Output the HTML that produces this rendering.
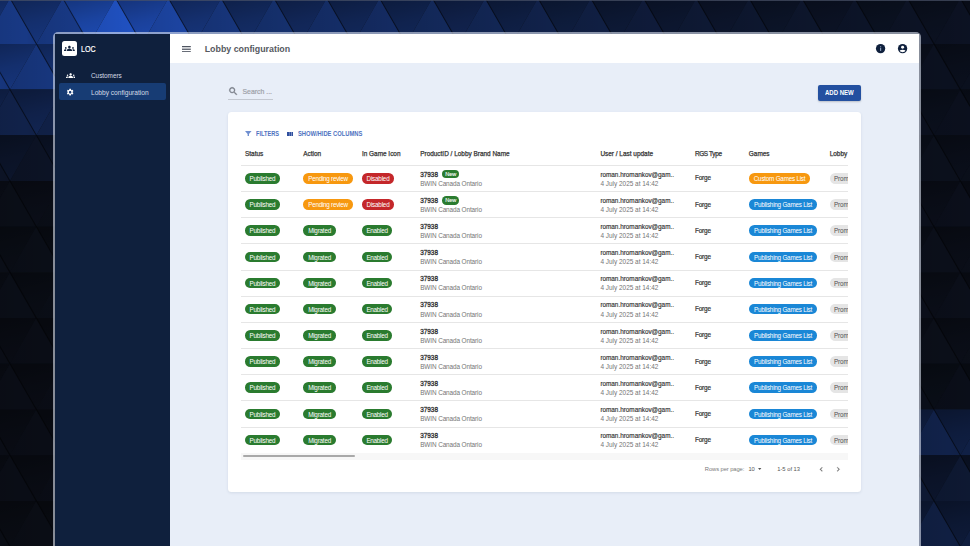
<!DOCTYPE html>
<html><head><meta charset="utf-8"><style>
html,body{margin:0;padding:0;}
body{width:970px;height:546px;overflow:hidden;position:relative;background:#0b0e15;font-family:"Liberation Sans",sans-serif;}
.abs{position:absolute;}
.t{position:absolute;white-space:nowrap;line-height:normal;}
#win{position:absolute;left:53px;top:32px;width:864px;height:530px;border:2px solid rgba(220,226,240,0.6);border-right-width:2.5px;border-radius:5px 5px 0 0;overflow:hidden;background:#e8eef8;background-clip:padding-box;}
#side{position:absolute;left:55px;top:34px;width:115px;height:520px;background:#0f203d;}
#top{position:absolute;left:170px;top:34px;width:748.5px;height:28.5px;background:#fff;}
#card{position:absolute;left:227.8px;top:112px;width:633px;height:380.3px;background:#fff;border-radius:3.5px;box-shadow:0 1px 3px rgba(30,50,90,0.10);}
#clip{position:absolute;left:0;top:0;width:848px;height:546px;overflow:hidden;}
.bd{position:absolute;text-align:center;white-space:nowrap;overflow:hidden;font-family:"Liberation Sans",sans-serif;}
.div{position:absolute;left:240.5px;width:607.5px;height:0.9px;background:#e6e6e6;}
</style></head><body>
<svg width="970" height="546" style="position:absolute;left:0;top:0"><defs><linearGradient id="gd" x1="0.35" y1="0" x2="0.65" y2="1"><stop offset="0" stop-color="#000" stop-opacity="0.34"/><stop offset="0.5" stop-color="#000" stop-opacity="0.18"/><stop offset="1" stop-color="#000" stop-opacity="0.08"/></linearGradient><linearGradient id="gu" x1="0" y1="0" x2="1" y2="0"><stop offset="0" stop-color="#000" stop-opacity="0.08"/><stop offset="0.8" stop-color="#000" stop-opacity="0"/><stop offset="1" stop-color="#000" stop-opacity="0.05"/></linearGradient></defs><path d="M-95.6 -1.8L-69.2 43.9L-122.0 43.9Z" fill="rgb(24, 57, 133)"/><path d="M-95.6 -1.8L-69.2 43.9L-122.0 43.9Z" fill="url(#gu)"/><path d="M-95.6 -1.8L-42.8 -1.8L-69.2 43.9Z" fill="rgb(24, 57, 133)"/><path d="M-95.6 -1.8L-42.8 -1.8L-69.2 43.9Z" fill="url(#gd)"/><path d="M-42.8 -1.8L-16.4 43.9L-69.2 43.9Z" fill="rgb(24, 57, 133)"/><path d="M-42.8 -1.8L-16.4 43.9L-69.2 43.9Z" fill="url(#gu)"/><path d="M-42.8 -1.8L10.0 -1.8L-16.4 43.9Z" fill="rgb(24, 57, 133)"/><path d="M-42.8 -1.8L10.0 -1.8L-16.4 43.9Z" fill="url(#gd)"/><path d="M10.0 -1.8L36.4 43.9L-16.4 43.9Z" fill="rgb(24, 57, 133)"/><path d="M10.0 -1.8L36.4 43.9L-16.4 43.9Z" fill="url(#gu)"/><path d="M10.0 -1.8L62.8 -1.8L36.4 43.9Z" fill="rgb(24, 57, 133)"/><path d="M10.0 -1.8L62.8 -1.8L36.4 43.9Z" fill="url(#gd)"/><path d="M62.8 -1.8L89.2 43.9L36.4 43.9Z" fill="rgb(24, 57, 133)"/><path d="M62.8 -1.8L89.2 43.9L36.4 43.9Z" fill="url(#gu)"/><path d="M62.8 -1.8L115.6 -1.8L89.2 43.9Z" fill="rgb(32, 82, 195)"/><path d="M62.8 -1.8L115.6 -1.8L89.2 43.9Z" fill="url(#gd)"/><path d="M115.6 -1.8L142.0 43.9L89.2 43.9Z" fill="rgb(32, 81, 193)"/><path d="M115.6 -1.8L142.0 43.9L89.2 43.9Z" fill="url(#gu)"/><path d="M115.6 -1.8L168.4 -1.8L142.0 43.9Z" fill="rgb(32, 79, 189)"/><path d="M115.6 -1.8L168.4 -1.8L142.0 43.9Z" fill="url(#gd)"/><path d="M168.4 -1.8L194.8 43.9L142.0 43.9Z" fill="rgb(28, 68, 161)"/><path d="M168.4 -1.8L194.8 43.9L142.0 43.9Z" fill="url(#gu)"/><path d="M168.4 -1.8L221.2 -1.8L194.8 43.9Z" fill="rgb(25, 58, 135)"/><path d="M168.4 -1.8L221.2 -1.8L194.8 43.9Z" fill="url(#gd)"/><path d="M221.2 -1.8L247.6 43.9L194.8 43.9Z" fill="rgb(23, 53, 123)"/><path d="M221.2 -1.8L247.6 43.9L194.8 43.9Z" fill="url(#gu)"/><path d="M221.2 -1.8L274.0 -1.8L247.6 43.9Z" fill="rgb(22, 50, 114)"/><path d="M221.2 -1.8L274.0 -1.8L247.6 43.9Z" fill="url(#gd)"/><path d="M274.0 -1.8L300.4 43.9L247.6 43.9Z" fill="rgb(21, 48, 109)"/><path d="M274.0 -1.8L300.4 43.9L247.6 43.9Z" fill="url(#gu)"/><path d="M274.0 -1.8L326.8 -1.8L300.4 43.9Z" fill="rgb(21, 46, 105)"/><path d="M274.0 -1.8L326.8 -1.8L300.4 43.9Z" fill="url(#gd)"/><path d="M326.8 -1.8L353.2 43.9L300.4 43.9Z" fill="rgb(20, 45, 103)"/><path d="M326.8 -1.8L353.2 43.9L300.4 43.9Z" fill="url(#gu)"/><path d="M326.8 -1.8L379.6 -1.8L353.2 43.9Z" fill="rgb(20, 44, 100)"/><path d="M326.8 -1.8L379.6 -1.8L353.2 43.9Z" fill="url(#gd)"/><path d="M379.6 -1.8L406.0 43.9L353.2 43.9Z" fill="rgb(20, 43, 98)"/><path d="M379.6 -1.8L406.0 43.9L353.2 43.9Z" fill="url(#gu)"/><path d="M379.6 -1.8L432.4 -1.8L406.0 43.9Z" fill="rgb(19, 42, 95)"/><path d="M379.6 -1.8L432.4 -1.8L406.0 43.9Z" fill="url(#gd)"/><path d="M432.4 -1.8L458.8 43.9L406.0 43.9Z" fill="rgb(19, 41, 91)"/><path d="M432.4 -1.8L458.8 43.9L406.0 43.9Z" fill="url(#gu)"/><path d="M432.4 -1.8L485.2 -1.8L458.8 43.9Z" fill="rgb(19, 39, 88)"/><path d="M432.4 -1.8L485.2 -1.8L458.8 43.9Z" fill="url(#gd)"/><path d="M485.2 -1.8L511.6 43.9L458.8 43.9Z" fill="rgb(18, 38, 84)"/><path d="M485.2 -1.8L511.6 43.9L458.8 43.9Z" fill="url(#gu)"/><path d="M485.2 -1.8L538.0 -1.8L511.6 43.9Z" fill="rgb(17, 36, 80)"/><path d="M485.2 -1.8L538.0 -1.8L511.6 43.9Z" fill="url(#gd)"/><path d="M538.0 -1.8L564.4 43.9L511.6 43.9Z" fill="rgb(17, 34, 75)"/><path d="M538.0 -1.8L564.4 43.9L511.6 43.9Z" fill="url(#gu)"/><path d="M538.0 -1.8L590.8 -1.8L564.4 43.9Z" fill="rgb(16, 33, 71)"/><path d="M538.0 -1.8L590.8 -1.8L564.4 43.9Z" fill="url(#gd)"/><path d="M590.8 -1.8L617.2 43.9L564.4 43.9Z" fill="rgb(16, 31, 67)"/><path d="M590.8 -1.8L617.2 43.9L564.4 43.9Z" fill="url(#gu)"/><path d="M590.8 -1.8L643.6 -1.8L617.2 43.9Z" fill="rgb(15, 29, 62)"/><path d="M590.8 -1.8L643.6 -1.8L617.2 43.9Z" fill="url(#gd)"/><path d="M643.6 -1.8L670.0 43.9L617.2 43.9Z" fill="rgb(15, 27, 58)"/><path d="M643.6 -1.8L670.0 43.9L617.2 43.9Z" fill="url(#gu)"/><path d="M643.6 -1.8L696.4 -1.8L670.0 43.9Z" fill="rgb(14, 26, 55)"/><path d="M643.6 -1.8L696.4 -1.8L670.0 43.9Z" fill="url(#gd)"/><path d="M696.4 -1.8L722.8 43.9L670.0 43.9Z" fill="rgb(14, 25, 52)"/><path d="M696.4 -1.8L722.8 43.9L670.0 43.9Z" fill="url(#gu)"/><path d="M696.4 -1.8L749.2 -1.8L722.8 43.9Z" fill="rgb(14, 24, 50)"/><path d="M696.4 -1.8L749.2 -1.8L722.8 43.9Z" fill="url(#gd)"/><path d="M749.2 -1.8L775.6 43.9L722.8 43.9Z" fill="rgb(13, 23, 47)"/><path d="M749.2 -1.8L775.6 43.9L722.8 43.9Z" fill="url(#gu)"/><path d="M749.2 -1.8L802.0 -1.8L775.6 43.9Z" fill="rgb(13, 23, 46)"/><path d="M749.2 -1.8L802.0 -1.8L775.6 43.9Z" fill="url(#gd)"/><path d="M802.0 -1.8L828.4 43.9L775.6 43.9Z" fill="rgb(13, 22, 44)"/><path d="M802.0 -1.8L828.4 43.9L775.6 43.9Z" fill="url(#gu)"/><path d="M802.0 -1.8L854.8 -1.8L828.4 43.9Z" fill="rgb(13, 21, 42)"/><path d="M802.0 -1.8L854.8 -1.8L828.4 43.9Z" fill="url(#gd)"/><path d="M854.8 -1.8L881.2 43.9L828.4 43.9Z" fill="rgb(12, 20, 40)"/><path d="M854.8 -1.8L881.2 43.9L828.4 43.9Z" fill="url(#gu)"/><path d="M854.8 -1.8L907.6 -1.8L881.2 43.9Z" fill="rgb(12, 20, 38)"/><path d="M854.8 -1.8L907.6 -1.8L881.2 43.9Z" fill="url(#gd)"/><path d="M907.6 -1.8L934.0 43.9L881.2 43.9Z" fill="rgb(12, 19, 37)"/><path d="M907.6 -1.8L934.0 43.9L881.2 43.9Z" fill="url(#gu)"/><path d="M907.6 -1.8L960.4 -1.8L934.0 43.9Z" fill="rgb(12, 19, 36)"/><path d="M907.6 -1.8L960.4 -1.8L934.0 43.9Z" fill="url(#gd)"/><path d="M960.4 -1.8L986.8 43.9L934.0 43.9Z" fill="rgb(12, 18, 35)"/><path d="M960.4 -1.8L986.8 43.9L934.0 43.9Z" fill="url(#gu)"/><path d="M960.4 -1.8L1013.2 -1.8L986.8 43.9Z" fill="rgb(12, 18, 34)"/><path d="M960.4 -1.8L1013.2 -1.8L986.8 43.9Z" fill="url(#gd)"/><path d="M1013.2 -1.8L1039.6 43.9L986.8 43.9Z" fill="rgb(12, 18, 34)"/><path d="M1013.2 -1.8L1039.6 43.9L986.8 43.9Z" fill="url(#gu)"/><path d="M1013.2 -1.8L1066.0 -1.8L1039.6 43.9Z" fill="rgb(12, 18, 34)"/><path d="M1013.2 -1.8L1066.0 -1.8L1039.6 43.9Z" fill="url(#gd)"/><path d="M1066.0 -1.8L1092.4 43.9L1039.6 43.9Z" fill="rgb(12, 18, 34)"/><path d="M1066.0 -1.8L1092.4 43.9L1039.6 43.9Z" fill="url(#gu)"/><path d="M1066.0 -1.8L1118.8 -1.8L1092.4 43.9Z" fill="rgb(12, 18, 34)"/><path d="M1066.0 -1.8L1118.8 -1.8L1092.4 43.9Z" fill="url(#gd)"/><path d="M-69.2 43.9L-42.8 89.6L-95.6 89.6Z" fill="rgb(23, 54, 125)"/><path d="M-69.2 43.9L-42.8 89.6L-95.6 89.6Z" fill="url(#gu)"/><path d="M-69.2 43.9L-16.4 43.9L-42.8 89.6Z" fill="rgb(24, 57, 133)"/><path d="M-69.2 43.9L-16.4 43.9L-42.8 89.6Z" fill="url(#gd)"/><path d="M-16.4 43.9L10.0 89.6L-42.8 89.6Z" fill="rgb(23, 54, 125)"/><path d="M-16.4 43.9L10.0 89.6L-42.8 89.6Z" fill="url(#gu)"/><path d="M-16.4 43.9L36.4 43.9L10.0 89.6Z" fill="rgb(24, 57, 133)"/><path d="M-16.4 43.9L36.4 43.9L10.0 89.6Z" fill="url(#gd)"/><path d="M36.4 43.9L62.8 89.6L10.0 89.6Z" fill="rgb(23, 54, 125)"/><path d="M36.4 43.9L62.8 89.6L10.0 89.6Z" fill="url(#gu)"/><path d="M36.4 43.9L89.2 43.9L62.8 89.6Z" fill="rgb(24, 57, 133)"/><path d="M36.4 43.9L89.2 43.9L62.8 89.6Z" fill="url(#gd)"/><path d="M89.2 43.9L115.6 89.6L62.8 89.6Z" fill="rgb(11, 15, 27)"/><path d="M89.2 43.9L115.6 89.6L62.8 89.6Z" fill="url(#gu)"/><path d="M89.2 43.9L142.0 43.9L115.6 89.6Z" fill="rgb(11, 15, 27)"/><path d="M89.2 43.9L142.0 43.9L115.6 89.6Z" fill="url(#gd)"/><path d="M142.0 43.9L168.4 89.6L115.6 89.6Z" fill="rgb(11, 15, 27)"/><path d="M142.0 43.9L168.4 89.6L115.6 89.6Z" fill="url(#gu)"/><path d="M142.0 43.9L194.8 43.9L168.4 89.6Z" fill="rgb(11, 15, 27)"/><path d="M142.0 43.9L194.8 43.9L168.4 89.6Z" fill="url(#gd)"/><path d="M194.8 43.9L221.2 89.6L168.4 89.6Z" fill="rgb(11, 15, 27)"/><path d="M194.8 43.9L221.2 89.6L168.4 89.6Z" fill="url(#gu)"/><path d="M194.8 43.9L247.6 43.9L221.2 89.6Z" fill="rgb(11, 15, 27)"/><path d="M194.8 43.9L247.6 43.9L221.2 89.6Z" fill="url(#gd)"/><path d="M247.6 43.9L274.0 89.6L221.2 89.6Z" fill="rgb(11, 15, 27)"/><path d="M247.6 43.9L274.0 89.6L221.2 89.6Z" fill="url(#gu)"/><path d="M247.6 43.9L300.4 43.9L274.0 89.6Z" fill="rgb(11, 15, 27)"/><path d="M247.6 43.9L300.4 43.9L274.0 89.6Z" fill="url(#gd)"/><path d="M300.4 43.9L326.8 89.6L274.0 89.6Z" fill="rgb(11, 15, 27)"/><path d="M300.4 43.9L326.8 89.6L274.0 89.6Z" fill="url(#gu)"/><path d="M300.4 43.9L353.2 43.9L326.8 89.6Z" fill="rgb(11, 15, 27)"/><path d="M300.4 43.9L353.2 43.9L326.8 89.6Z" fill="url(#gd)"/><path d="M353.2 43.9L379.6 89.6L326.8 89.6Z" fill="rgb(11, 15, 27)"/><path d="M353.2 43.9L379.6 89.6L326.8 89.6Z" fill="url(#gu)"/><path d="M353.2 43.9L406.0 43.9L379.6 89.6Z" fill="rgb(11, 15, 27)"/><path d="M353.2 43.9L406.0 43.9L379.6 89.6Z" fill="url(#gd)"/><path d="M406.0 43.9L432.4 89.6L379.6 89.6Z" fill="rgb(11, 15, 27)"/><path d="M406.0 43.9L432.4 89.6L379.6 89.6Z" fill="url(#gu)"/><path d="M406.0 43.9L458.8 43.9L432.4 89.6Z" fill="rgb(11, 15, 27)"/><path d="M406.0 43.9L458.8 43.9L432.4 89.6Z" fill="url(#gd)"/><path d="M458.8 43.9L485.2 89.6L432.4 89.6Z" fill="rgb(11, 15, 27)"/><path d="M458.8 43.9L485.2 89.6L432.4 89.6Z" fill="url(#gu)"/><path d="M458.8 43.9L511.6 43.9L485.2 89.6Z" fill="rgb(11, 15, 27)"/><path d="M458.8 43.9L511.6 43.9L485.2 89.6Z" fill="url(#gd)"/><path d="M511.6 43.9L538.0 89.6L485.2 89.6Z" fill="rgb(11, 15, 27)"/><path d="M511.6 43.9L538.0 89.6L485.2 89.6Z" fill="url(#gu)"/><path d="M511.6 43.9L564.4 43.9L538.0 89.6Z" fill="rgb(11, 15, 27)"/><path d="M511.6 43.9L564.4 43.9L538.0 89.6Z" fill="url(#gd)"/><path d="M564.4 43.9L590.8 89.6L538.0 89.6Z" fill="rgb(11, 15, 27)"/><path d="M564.4 43.9L590.8 89.6L538.0 89.6Z" fill="url(#gu)"/><path d="M564.4 43.9L617.2 43.9L590.8 89.6Z" fill="rgb(11, 15, 27)"/><path d="M564.4 43.9L617.2 43.9L590.8 89.6Z" fill="url(#gd)"/><path d="M617.2 43.9L643.6 89.6L590.8 89.6Z" fill="rgb(11, 15, 27)"/><path d="M617.2 43.9L643.6 89.6L590.8 89.6Z" fill="url(#gu)"/><path d="M617.2 43.9L670.0 43.9L643.6 89.6Z" fill="rgb(11, 15, 27)"/><path d="M617.2 43.9L670.0 43.9L643.6 89.6Z" fill="url(#gd)"/><path d="M670.0 43.9L696.4 89.6L643.6 89.6Z" fill="rgb(11, 15, 27)"/><path d="M670.0 43.9L696.4 89.6L643.6 89.6Z" fill="url(#gu)"/><path d="M670.0 43.9L722.8 43.9L696.4 89.6Z" fill="rgb(11, 15, 27)"/><path d="M670.0 43.9L722.8 43.9L696.4 89.6Z" fill="url(#gd)"/><path d="M722.8 43.9L749.2 89.6L696.4 89.6Z" fill="rgb(11, 15, 27)"/><path d="M722.8 43.9L749.2 89.6L696.4 89.6Z" fill="url(#gu)"/><path d="M722.8 43.9L775.6 43.9L749.2 89.6Z" fill="rgb(11, 15, 27)"/><path d="M722.8 43.9L775.6 43.9L749.2 89.6Z" fill="url(#gd)"/><path d="M775.6 43.9L802.0 89.6L749.2 89.6Z" fill="rgb(11, 15, 27)"/><path d="M775.6 43.9L802.0 89.6L749.2 89.6Z" fill="url(#gu)"/><path d="M775.6 43.9L828.4 43.9L802.0 89.6Z" fill="rgb(11, 15, 27)"/><path d="M775.6 43.9L828.4 43.9L802.0 89.6Z" fill="url(#gd)"/><path d="M828.4 43.9L854.8 89.6L802.0 89.6Z" fill="rgb(11, 15, 27)"/><path d="M828.4 43.9L854.8 89.6L802.0 89.6Z" fill="url(#gu)"/><path d="M828.4 43.9L881.2 43.9L854.8 89.6Z" fill="rgb(11, 15, 27)"/><path d="M828.4 43.9L881.2 43.9L854.8 89.6Z" fill="url(#gd)"/><path d="M881.2 43.9L907.6 89.6L854.8 89.6Z" fill="rgb(11, 15, 27)"/><path d="M881.2 43.9L907.6 89.6L854.8 89.6Z" fill="url(#gu)"/><path d="M881.2 43.9L934.0 43.9L907.6 89.6Z" fill="rgb(11, 17, 32)"/><path d="M881.2 43.9L934.0 43.9L907.6 89.6Z" fill="url(#gd)"/><path d="M934.0 43.9L960.4 89.6L907.6 89.6Z" fill="rgb(11, 17, 32)"/><path d="M934.0 43.9L960.4 89.6L907.6 89.6Z" fill="url(#gu)"/><path d="M934.0 43.9L986.8 43.9L960.4 89.6Z" fill="rgb(11, 17, 32)"/><path d="M934.0 43.9L986.8 43.9L960.4 89.6Z" fill="url(#gd)"/><path d="M986.8 43.9L1013.2 89.6L960.4 89.6Z" fill="rgb(11, 17, 32)"/><path d="M986.8 43.9L1013.2 89.6L960.4 89.6Z" fill="url(#gu)"/><path d="M986.8 43.9L1039.6 43.9L1013.2 89.6Z" fill="rgb(11, 17, 32)"/><path d="M986.8 43.9L1039.6 43.9L1013.2 89.6Z" fill="url(#gd)"/><path d="M1039.6 43.9L1066.0 89.6L1013.2 89.6Z" fill="rgb(11, 17, 32)"/><path d="M1039.6 43.9L1066.0 89.6L1013.2 89.6Z" fill="url(#gu)"/><path d="M1039.6 43.9L1092.4 43.9L1066.0 89.6Z" fill="rgb(11, 17, 32)"/><path d="M1039.6 43.9L1092.4 43.9L1066.0 89.6Z" fill="url(#gd)"/><path d="M1092.4 43.9L1118.8 89.6L1066.0 89.6Z" fill="rgb(11, 17, 32)"/><path d="M1092.4 43.9L1118.8 89.6L1066.0 89.6Z" fill="url(#gu)"/><path d="M1092.4 43.9L1145.2 43.9L1118.8 89.6Z" fill="rgb(11, 17, 32)"/><path d="M1092.4 43.9L1145.2 43.9L1118.8 89.6Z" fill="url(#gd)"/><path d="M-95.6 89.6L-69.2 135.3L-122.0 135.3Z" fill="rgb(17, 34, 74)"/><path d="M-95.6 89.6L-69.2 135.3L-122.0 135.3Z" fill="url(#gu)"/><path d="M-95.6 89.6L-42.8 89.6L-69.2 135.3Z" fill="rgb(19, 40, 89)"/><path d="M-95.6 89.6L-42.8 89.6L-69.2 135.3Z" fill="url(#gd)"/><path d="M-42.8 89.6L-16.4 135.3L-69.2 135.3Z" fill="rgb(17, 34, 74)"/><path d="M-42.8 89.6L-16.4 135.3L-69.2 135.3Z" fill="url(#gu)"/><path d="M-42.8 89.6L10.0 89.6L-16.4 135.3Z" fill="rgb(19, 40, 89)"/><path d="M-42.8 89.6L10.0 89.6L-16.4 135.3Z" fill="url(#gd)"/><path d="M10.0 89.6L36.4 135.3L-16.4 135.3Z" fill="rgb(17, 34, 74)"/><path d="M10.0 89.6L36.4 135.3L-16.4 135.3Z" fill="url(#gu)"/><path d="M10.0 89.6L62.8 89.6L36.4 135.3Z" fill="rgb(19, 40, 89)"/><path d="M10.0 89.6L62.8 89.6L36.4 135.3Z" fill="url(#gd)"/><path d="M62.8 89.6L89.2 135.3L36.4 135.3Z" fill="rgb(17, 34, 74)"/><path d="M62.8 89.6L89.2 135.3L36.4 135.3Z" fill="url(#gu)"/><path d="M62.8 89.6L115.6 89.6L89.2 135.3Z" fill="rgb(11, 15, 27)"/><path d="M62.8 89.6L115.6 89.6L89.2 135.3Z" fill="url(#gd)"/><path d="M115.6 89.6L142.0 135.3L89.2 135.3Z" fill="rgb(11, 15, 27)"/><path d="M115.6 89.6L142.0 135.3L89.2 135.3Z" fill="url(#gu)"/><path d="M115.6 89.6L168.4 89.6L142.0 135.3Z" fill="rgb(11, 15, 27)"/><path d="M115.6 89.6L168.4 89.6L142.0 135.3Z" fill="url(#gd)"/><path d="M168.4 89.6L194.8 135.3L142.0 135.3Z" fill="rgb(11, 15, 27)"/><path d="M168.4 89.6L194.8 135.3L142.0 135.3Z" fill="url(#gu)"/><path d="M168.4 89.6L221.2 89.6L194.8 135.3Z" fill="rgb(11, 15, 27)"/><path d="M168.4 89.6L221.2 89.6L194.8 135.3Z" fill="url(#gd)"/><path d="M221.2 89.6L247.6 135.3L194.8 135.3Z" fill="rgb(11, 15, 27)"/><path d="M221.2 89.6L247.6 135.3L194.8 135.3Z" fill="url(#gu)"/><path d="M221.2 89.6L274.0 89.6L247.6 135.3Z" fill="rgb(11, 15, 27)"/><path d="M221.2 89.6L274.0 89.6L247.6 135.3Z" fill="url(#gd)"/><path d="M274.0 89.6L300.4 135.3L247.6 135.3Z" fill="rgb(11, 15, 27)"/><path d="M274.0 89.6L300.4 135.3L247.6 135.3Z" fill="url(#gu)"/><path d="M274.0 89.6L326.8 89.6L300.4 135.3Z" fill="rgb(11, 15, 27)"/><path d="M274.0 89.6L326.8 89.6L300.4 135.3Z" fill="url(#gd)"/><path d="M326.8 89.6L353.2 135.3L300.4 135.3Z" fill="rgb(11, 15, 27)"/><path d="M326.8 89.6L353.2 135.3L300.4 135.3Z" fill="url(#gu)"/><path d="M326.8 89.6L379.6 89.6L353.2 135.3Z" fill="rgb(11, 15, 27)"/><path d="M326.8 89.6L379.6 89.6L353.2 135.3Z" fill="url(#gd)"/><path d="M379.6 89.6L406.0 135.3L353.2 135.3Z" fill="rgb(11, 15, 27)"/><path d="M379.6 89.6L406.0 135.3L353.2 135.3Z" fill="url(#gu)"/><path d="M379.6 89.6L432.4 89.6L406.0 135.3Z" fill="rgb(11, 15, 27)"/><path d="M379.6 89.6L432.4 89.6L406.0 135.3Z" fill="url(#gd)"/><path d="M432.4 89.6L458.8 135.3L406.0 135.3Z" fill="rgb(11, 15, 27)"/><path d="M432.4 89.6L458.8 135.3L406.0 135.3Z" fill="url(#gu)"/><path d="M432.4 89.6L485.2 89.6L458.8 135.3Z" fill="rgb(11, 15, 27)"/><path d="M432.4 89.6L485.2 89.6L458.8 135.3Z" fill="url(#gd)"/><path d="M485.2 89.6L511.6 135.3L458.8 135.3Z" fill="rgb(11, 15, 27)"/><path d="M485.2 89.6L511.6 135.3L458.8 135.3Z" fill="url(#gu)"/><path d="M485.2 89.6L538.0 89.6L511.6 135.3Z" fill="rgb(11, 15, 27)"/><path d="M485.2 89.6L538.0 89.6L511.6 135.3Z" fill="url(#gd)"/><path d="M538.0 89.6L564.4 135.3L511.6 135.3Z" fill="rgb(11, 15, 27)"/><path d="M538.0 89.6L564.4 135.3L511.6 135.3Z" fill="url(#gu)"/><path d="M538.0 89.6L590.8 89.6L564.4 135.3Z" fill="rgb(11, 15, 27)"/><path d="M538.0 89.6L590.8 89.6L564.4 135.3Z" fill="url(#gd)"/><path d="M590.8 89.6L617.2 135.3L564.4 135.3Z" fill="rgb(11, 15, 27)"/><path d="M590.8 89.6L617.2 135.3L564.4 135.3Z" fill="url(#gu)"/><path d="M590.8 89.6L643.6 89.6L617.2 135.3Z" fill="rgb(11, 15, 27)"/><path d="M590.8 89.6L643.6 89.6L617.2 135.3Z" fill="url(#gd)"/><path d="M643.6 89.6L670.0 135.3L617.2 135.3Z" fill="rgb(11, 15, 27)"/><path d="M643.6 89.6L670.0 135.3L617.2 135.3Z" fill="url(#gu)"/><path d="M643.6 89.6L696.4 89.6L670.0 135.3Z" fill="rgb(11, 15, 27)"/><path d="M643.6 89.6L696.4 89.6L670.0 135.3Z" fill="url(#gd)"/><path d="M696.4 89.6L722.8 135.3L670.0 135.3Z" fill="rgb(11, 15, 27)"/><path d="M696.4 89.6L722.8 135.3L670.0 135.3Z" fill="url(#gu)"/><path d="M696.4 89.6L749.2 89.6L722.8 135.3Z" fill="rgb(11, 15, 27)"/><path d="M696.4 89.6L749.2 89.6L722.8 135.3Z" fill="url(#gd)"/><path d="M749.2 89.6L775.6 135.3L722.8 135.3Z" fill="rgb(11, 15, 27)"/><path d="M749.2 89.6L775.6 135.3L722.8 135.3Z" fill="url(#gu)"/><path d="M749.2 89.6L802.0 89.6L775.6 135.3Z" fill="rgb(11, 15, 27)"/><path d="M749.2 89.6L802.0 89.6L775.6 135.3Z" fill="url(#gd)"/><path d="M802.0 89.6L828.4 135.3L775.6 135.3Z" fill="rgb(11, 15, 27)"/><path d="M802.0 89.6L828.4 135.3L775.6 135.3Z" fill="url(#gu)"/><path d="M802.0 89.6L854.8 89.6L828.4 135.3Z" fill="rgb(11, 15, 27)"/><path d="M802.0 89.6L854.8 89.6L828.4 135.3Z" fill="url(#gd)"/><path d="M854.8 89.6L881.2 135.3L828.4 135.3Z" fill="rgb(11, 15, 27)"/><path d="M854.8 89.6L881.2 135.3L828.4 135.3Z" fill="url(#gu)"/><path d="M854.8 89.6L907.6 89.6L881.2 135.3Z" fill="rgb(11, 15, 27)"/><path d="M854.8 89.6L907.6 89.6L881.2 135.3Z" fill="url(#gd)"/><path d="M907.6 89.6L934.0 135.3L881.2 135.3Z" fill="rgb(11, 16, 30)"/><path d="M907.6 89.6L934.0 135.3L881.2 135.3Z" fill="url(#gu)"/><path d="M907.6 89.6L960.4 89.6L934.0 135.3Z" fill="rgb(11, 17, 31)"/><path d="M907.6 89.6L960.4 89.6L934.0 135.3Z" fill="url(#gd)"/><path d="M960.4 89.6L986.8 135.3L934.0 135.3Z" fill="rgb(11, 16, 30)"/><path d="M960.4 89.6L986.8 135.3L934.0 135.3Z" fill="url(#gu)"/><path d="M960.4 89.6L1013.2 89.6L986.8 135.3Z" fill="rgb(11, 17, 31)"/><path d="M960.4 89.6L1013.2 89.6L986.8 135.3Z" fill="url(#gd)"/><path d="M1013.2 89.6L1039.6 135.3L986.8 135.3Z" fill="rgb(11, 16, 30)"/><path d="M1013.2 89.6L1039.6 135.3L986.8 135.3Z" fill="url(#gu)"/><path d="M1013.2 89.6L1066.0 89.6L1039.6 135.3Z" fill="rgb(11, 17, 31)"/><path d="M1013.2 89.6L1066.0 89.6L1039.6 135.3Z" fill="url(#gd)"/><path d="M1066.0 89.6L1092.4 135.3L1039.6 135.3Z" fill="rgb(11, 16, 30)"/><path d="M1066.0 89.6L1092.4 135.3L1039.6 135.3Z" fill="url(#gu)"/><path d="M1066.0 89.6L1118.8 89.6L1092.4 135.3Z" fill="rgb(11, 17, 31)"/><path d="M1066.0 89.6L1118.8 89.6L1092.4 135.3Z" fill="url(#gd)"/><path d="M-69.2 135.3L-42.8 181.0L-95.6 181.0Z" fill="rgb(12, 19, 37)"/><path d="M-69.2 135.3L-42.8 181.0L-95.6 181.0Z" fill="url(#gu)"/><path d="M-69.2 135.3L-16.4 135.3L-42.8 181.0Z" fill="rgb(13, 23, 47)"/><path d="M-69.2 135.3L-16.4 135.3L-42.8 181.0Z" fill="url(#gd)"/><path d="M-16.4 135.3L10.0 181.0L-42.8 181.0Z" fill="rgb(12, 19, 37)"/><path d="M-16.4 135.3L10.0 181.0L-42.8 181.0Z" fill="url(#gu)"/><path d="M-16.4 135.3L36.4 135.3L10.0 181.0Z" fill="rgb(13, 23, 47)"/><path d="M-16.4 135.3L36.4 135.3L10.0 181.0Z" fill="url(#gd)"/><path d="M36.4 135.3L62.8 181.0L10.0 181.0Z" fill="rgb(12, 19, 37)"/><path d="M36.4 135.3L62.8 181.0L10.0 181.0Z" fill="url(#gu)"/><path d="M36.4 135.3L89.2 135.3L62.8 181.0Z" fill="rgb(13, 23, 47)"/><path d="M36.4 135.3L89.2 135.3L62.8 181.0Z" fill="url(#gd)"/><path d="M89.2 135.3L115.6 181.0L62.8 181.0Z" fill="rgb(11, 15, 27)"/><path d="M89.2 135.3L115.6 181.0L62.8 181.0Z" fill="url(#gu)"/><path d="M89.2 135.3L142.0 135.3L115.6 181.0Z" fill="rgb(11, 15, 27)"/><path d="M89.2 135.3L142.0 135.3L115.6 181.0Z" fill="url(#gd)"/><path d="M142.0 135.3L168.4 181.0L115.6 181.0Z" fill="rgb(11, 15, 27)"/><path d="M142.0 135.3L168.4 181.0L115.6 181.0Z" fill="url(#gu)"/><path d="M142.0 135.3L194.8 135.3L168.4 181.0Z" fill="rgb(11, 15, 27)"/><path d="M142.0 135.3L194.8 135.3L168.4 181.0Z" fill="url(#gd)"/><path d="M194.8 135.3L221.2 181.0L168.4 181.0Z" fill="rgb(11, 15, 27)"/><path d="M194.8 135.3L221.2 181.0L168.4 181.0Z" fill="url(#gu)"/><path d="M194.8 135.3L247.6 135.3L221.2 181.0Z" fill="rgb(11, 15, 27)"/><path d="M194.8 135.3L247.6 135.3L221.2 181.0Z" fill="url(#gd)"/><path d="M247.6 135.3L274.0 181.0L221.2 181.0Z" fill="rgb(11, 15, 27)"/><path d="M247.6 135.3L274.0 181.0L221.2 181.0Z" fill="url(#gu)"/><path d="M247.6 135.3L300.4 135.3L274.0 181.0Z" fill="rgb(11, 15, 27)"/><path d="M247.6 135.3L300.4 135.3L274.0 181.0Z" fill="url(#gd)"/><path d="M300.4 135.3L326.8 181.0L274.0 181.0Z" fill="rgb(11, 15, 27)"/><path d="M300.4 135.3L326.8 181.0L274.0 181.0Z" fill="url(#gu)"/><path d="M300.4 135.3L353.2 135.3L326.8 181.0Z" fill="rgb(11, 15, 27)"/><path d="M300.4 135.3L353.2 135.3L326.8 181.0Z" fill="url(#gd)"/><path d="M353.2 135.3L379.6 181.0L326.8 181.0Z" fill="rgb(11, 15, 27)"/><path d="M353.2 135.3L379.6 181.0L326.8 181.0Z" fill="url(#gu)"/><path d="M353.2 135.3L406.0 135.3L379.6 181.0Z" fill="rgb(11, 15, 27)"/><path d="M353.2 135.3L406.0 135.3L379.6 181.0Z" fill="url(#gd)"/><path d="M406.0 135.3L432.4 181.0L379.6 181.0Z" fill="rgb(11, 15, 27)"/><path d="M406.0 135.3L432.4 181.0L379.6 181.0Z" fill="url(#gu)"/><path d="M406.0 135.3L458.8 135.3L432.4 181.0Z" fill="rgb(11, 15, 27)"/><path d="M406.0 135.3L458.8 135.3L432.4 181.0Z" fill="url(#gd)"/><path d="M458.8 135.3L485.2 181.0L432.4 181.0Z" fill="rgb(11, 15, 27)"/><path d="M458.8 135.3L485.2 181.0L432.4 181.0Z" fill="url(#gu)"/><path d="M458.8 135.3L511.6 135.3L485.2 181.0Z" fill="rgb(11, 15, 27)"/><path d="M458.8 135.3L511.6 135.3L485.2 181.0Z" fill="url(#gd)"/><path d="M511.6 135.3L538.0 181.0L485.2 181.0Z" fill="rgb(11, 15, 27)"/><path d="M511.6 135.3L538.0 181.0L485.2 181.0Z" fill="url(#gu)"/><path d="M511.6 135.3L564.4 135.3L538.0 181.0Z" fill="rgb(11, 15, 27)"/><path d="M511.6 135.3L564.4 135.3L538.0 181.0Z" fill="url(#gd)"/><path d="M564.4 135.3L590.8 181.0L538.0 181.0Z" fill="rgb(11, 15, 27)"/><path d="M564.4 135.3L590.8 181.0L538.0 181.0Z" fill="url(#gu)"/><path d="M564.4 135.3L617.2 135.3L590.8 181.0Z" fill="rgb(11, 15, 27)"/><path d="M564.4 135.3L617.2 135.3L590.8 181.0Z" fill="url(#gd)"/><path d="M617.2 135.3L643.6 181.0L590.8 181.0Z" fill="rgb(11, 15, 27)"/><path d="M617.2 135.3L643.6 181.0L590.8 181.0Z" fill="url(#gu)"/><path d="M617.2 135.3L670.0 135.3L643.6 181.0Z" fill="rgb(11, 15, 27)"/><path d="M617.2 135.3L670.0 135.3L643.6 181.0Z" fill="url(#gd)"/><path d="M670.0 135.3L696.4 181.0L643.6 181.0Z" fill="rgb(11, 15, 27)"/><path d="M670.0 135.3L696.4 181.0L643.6 181.0Z" fill="url(#gu)"/><path d="M670.0 135.3L722.8 135.3L696.4 181.0Z" fill="rgb(11, 15, 27)"/><path d="M670.0 135.3L722.8 135.3L696.4 181.0Z" fill="url(#gd)"/><path d="M722.8 135.3L749.2 181.0L696.4 181.0Z" fill="rgb(11, 15, 27)"/><path d="M722.8 135.3L749.2 181.0L696.4 181.0Z" fill="url(#gu)"/><path d="M722.8 135.3L775.6 135.3L749.2 181.0Z" fill="rgb(11, 15, 27)"/><path d="M722.8 135.3L775.6 135.3L749.2 181.0Z" fill="url(#gd)"/><path d="M775.6 135.3L802.0 181.0L749.2 181.0Z" fill="rgb(11, 15, 27)"/><path d="M775.6 135.3L802.0 181.0L749.2 181.0Z" fill="url(#gu)"/><path d="M775.6 135.3L828.4 135.3L802.0 181.0Z" fill="rgb(11, 15, 27)"/><path d="M775.6 135.3L828.4 135.3L802.0 181.0Z" fill="url(#gd)"/><path d="M828.4 135.3L854.8 181.0L802.0 181.0Z" fill="rgb(11, 15, 27)"/><path d="M828.4 135.3L854.8 181.0L802.0 181.0Z" fill="url(#gu)"/><path d="M828.4 135.3L881.2 135.3L854.8 181.0Z" fill="rgb(11, 15, 27)"/><path d="M828.4 135.3L881.2 135.3L854.8 181.0Z" fill="url(#gd)"/><path d="M881.2 135.3L907.6 181.0L854.8 181.0Z" fill="rgb(11, 15, 27)"/><path d="M881.2 135.3L907.6 181.0L854.8 181.0Z" fill="url(#gu)"/><path d="M881.2 135.3L934.0 135.3L907.6 181.0Z" fill="rgb(11, 16, 29)"/><path d="M881.2 135.3L934.0 135.3L907.6 181.0Z" fill="url(#gd)"/><path d="M934.0 135.3L960.4 181.0L907.6 181.0Z" fill="rgb(11, 16, 28)"/><path d="M934.0 135.3L960.4 181.0L907.6 181.0Z" fill="url(#gu)"/><path d="M934.0 135.3L986.8 135.3L960.4 181.0Z" fill="rgb(11, 16, 29)"/><path d="M934.0 135.3L986.8 135.3L960.4 181.0Z" fill="url(#gd)"/><path d="M986.8 135.3L1013.2 181.0L960.4 181.0Z" fill="rgb(11, 16, 28)"/><path d="M986.8 135.3L1013.2 181.0L960.4 181.0Z" fill="url(#gu)"/><path d="M986.8 135.3L1039.6 135.3L1013.2 181.0Z" fill="rgb(11, 16, 29)"/><path d="M986.8 135.3L1039.6 135.3L1013.2 181.0Z" fill="url(#gd)"/><path d="M1039.6 135.3L1066.0 181.0L1013.2 181.0Z" fill="rgb(11, 16, 28)"/><path d="M1039.6 135.3L1066.0 181.0L1013.2 181.0Z" fill="url(#gu)"/><path d="M1039.6 135.3L1092.4 135.3L1066.0 181.0Z" fill="rgb(11, 16, 29)"/><path d="M1039.6 135.3L1092.4 135.3L1066.0 181.0Z" fill="url(#gd)"/><path d="M1092.4 135.3L1118.8 181.0L1066.0 181.0Z" fill="rgb(11, 16, 28)"/><path d="M1092.4 135.3L1118.8 181.0L1066.0 181.0Z" fill="url(#gu)"/><path d="M1092.4 135.3L1145.2 135.3L1118.8 181.0Z" fill="rgb(11, 16, 29)"/><path d="M1092.4 135.3L1145.2 135.3L1118.8 181.0Z" fill="url(#gd)"/><path d="M-95.6 181.0L-69.2 226.7L-122.0 226.7Z" fill="rgb(10, 14, 23)"/><path d="M-95.6 181.0L-69.2 226.7L-122.0 226.7Z" fill="url(#gu)"/><path d="M-95.6 181.0L-42.8 181.0L-69.2 226.7Z" fill="rgb(11, 15, 26)"/><path d="M-95.6 181.0L-42.8 181.0L-69.2 226.7Z" fill="url(#gd)"/><path d="M-42.8 181.0L-16.4 226.7L-69.2 226.7Z" fill="rgb(10, 14, 23)"/><path d="M-42.8 181.0L-16.4 226.7L-69.2 226.7Z" fill="url(#gu)"/><path d="M-42.8 181.0L10.0 181.0L-16.4 226.7Z" fill="rgb(11, 15, 26)"/><path d="M-42.8 181.0L10.0 181.0L-16.4 226.7Z" fill="url(#gd)"/><path d="M10.0 181.0L36.4 226.7L-16.4 226.7Z" fill="rgb(10, 14, 23)"/><path d="M10.0 181.0L36.4 226.7L-16.4 226.7Z" fill="url(#gu)"/><path d="M10.0 181.0L62.8 181.0L36.4 226.7Z" fill="rgb(11, 15, 26)"/><path d="M10.0 181.0L62.8 181.0L36.4 226.7Z" fill="url(#gd)"/><path d="M62.8 181.0L89.2 226.7L36.4 226.7Z" fill="rgb(10, 14, 23)"/><path d="M62.8 181.0L89.2 226.7L36.4 226.7Z" fill="url(#gu)"/><path d="M62.8 181.0L115.6 181.0L89.2 226.7Z" fill="rgb(11, 15, 27)"/><path d="M62.8 181.0L115.6 181.0L89.2 226.7Z" fill="url(#gd)"/><path d="M115.6 181.0L142.0 226.7L89.2 226.7Z" fill="rgb(11, 15, 27)"/><path d="M115.6 181.0L142.0 226.7L89.2 226.7Z" fill="url(#gu)"/><path d="M115.6 181.0L168.4 181.0L142.0 226.7Z" fill="rgb(11, 15, 27)"/><path d="M115.6 181.0L168.4 181.0L142.0 226.7Z" fill="url(#gd)"/><path d="M168.4 181.0L194.8 226.7L142.0 226.7Z" fill="rgb(11, 15, 27)"/><path d="M168.4 181.0L194.8 226.7L142.0 226.7Z" fill="url(#gu)"/><path d="M168.4 181.0L221.2 181.0L194.8 226.7Z" fill="rgb(11, 15, 27)"/><path d="M168.4 181.0L221.2 181.0L194.8 226.7Z" fill="url(#gd)"/><path d="M221.2 181.0L247.6 226.7L194.8 226.7Z" fill="rgb(11, 15, 27)"/><path d="M221.2 181.0L247.6 226.7L194.8 226.7Z" fill="url(#gu)"/><path d="M221.2 181.0L274.0 181.0L247.6 226.7Z" fill="rgb(11, 15, 27)"/><path d="M221.2 181.0L274.0 181.0L247.6 226.7Z" fill="url(#gd)"/><path d="M274.0 181.0L300.4 226.7L247.6 226.7Z" fill="rgb(11, 15, 27)"/><path d="M274.0 181.0L300.4 226.7L247.6 226.7Z" fill="url(#gu)"/><path d="M274.0 181.0L326.8 181.0L300.4 226.7Z" fill="rgb(11, 15, 27)"/><path d="M274.0 181.0L326.8 181.0L300.4 226.7Z" fill="url(#gd)"/><path d="M326.8 181.0L353.2 226.7L300.4 226.7Z" fill="rgb(11, 15, 27)"/><path d="M326.8 181.0L353.2 226.7L300.4 226.7Z" fill="url(#gu)"/><path d="M326.8 181.0L379.6 181.0L353.2 226.7Z" fill="rgb(11, 15, 27)"/><path d="M326.8 181.0L379.6 181.0L353.2 226.7Z" fill="url(#gd)"/><path d="M379.6 181.0L406.0 226.7L353.2 226.7Z" fill="rgb(11, 15, 27)"/><path d="M379.6 181.0L406.0 226.7L353.2 226.7Z" fill="url(#gu)"/><path d="M379.6 181.0L432.4 181.0L406.0 226.7Z" fill="rgb(11, 15, 27)"/><path d="M379.6 181.0L432.4 181.0L406.0 226.7Z" fill="url(#gd)"/><path d="M432.4 181.0L458.8 226.7L406.0 226.7Z" fill="rgb(11, 15, 27)"/><path d="M432.4 181.0L458.8 226.7L406.0 226.7Z" fill="url(#gu)"/><path d="M432.4 181.0L485.2 181.0L458.8 226.7Z" fill="rgb(11, 15, 27)"/><path d="M432.4 181.0L485.2 181.0L458.8 226.7Z" fill="url(#gd)"/><path d="M485.2 181.0L511.6 226.7L458.8 226.7Z" fill="rgb(11, 15, 27)"/><path d="M485.2 181.0L511.6 226.7L458.8 226.7Z" fill="url(#gu)"/><path d="M485.2 181.0L538.0 181.0L511.6 226.7Z" fill="rgb(11, 15, 27)"/><path d="M485.2 181.0L538.0 181.0L511.6 226.7Z" fill="url(#gd)"/><path d="M538.0 181.0L564.4 226.7L511.6 226.7Z" fill="rgb(11, 15, 27)"/><path d="M538.0 181.0L564.4 226.7L511.6 226.7Z" fill="url(#gu)"/><path d="M538.0 181.0L590.8 181.0L564.4 226.7Z" fill="rgb(11, 15, 27)"/><path d="M538.0 181.0L590.8 181.0L564.4 226.7Z" fill="url(#gd)"/><path d="M590.8 181.0L617.2 226.7L564.4 226.7Z" fill="rgb(11, 15, 27)"/><path d="M590.8 181.0L617.2 226.7L564.4 226.7Z" fill="url(#gu)"/><path d="M590.8 181.0L643.6 181.0L617.2 226.7Z" fill="rgb(11, 15, 27)"/><path d="M590.8 181.0L643.6 181.0L617.2 226.7Z" fill="url(#gd)"/><path d="M643.6 181.0L670.0 226.7L617.2 226.7Z" fill="rgb(11, 15, 27)"/><path d="M643.6 181.0L670.0 226.7L617.2 226.7Z" fill="url(#gu)"/><path d="M643.6 181.0L696.4 181.0L670.0 226.7Z" fill="rgb(11, 15, 27)"/><path d="M643.6 181.0L696.4 181.0L670.0 226.7Z" fill="url(#gd)"/><path d="M696.4 181.0L722.8 226.7L670.0 226.7Z" fill="rgb(11, 15, 27)"/><path d="M696.4 181.0L722.8 226.7L670.0 226.7Z" fill="url(#gu)"/><path d="M696.4 181.0L749.2 181.0L722.8 226.7Z" fill="rgb(11, 15, 27)"/><path d="M696.4 181.0L749.2 181.0L722.8 226.7Z" fill="url(#gd)"/><path d="M749.2 181.0L775.6 226.7L722.8 226.7Z" fill="rgb(11, 15, 27)"/><path d="M749.2 181.0L775.6 226.7L722.8 226.7Z" fill="url(#gu)"/><path d="M749.2 181.0L802.0 181.0L775.6 226.7Z" fill="rgb(11, 15, 27)"/><path d="M749.2 181.0L802.0 181.0L775.6 226.7Z" fill="url(#gd)"/><path d="M802.0 181.0L828.4 226.7L775.6 226.7Z" fill="rgb(11, 15, 27)"/><path d="M802.0 181.0L828.4 226.7L775.6 226.7Z" fill="url(#gu)"/><path d="M802.0 181.0L854.8 181.0L828.4 226.7Z" fill="rgb(11, 15, 27)"/><path d="M802.0 181.0L854.8 181.0L828.4 226.7Z" fill="url(#gd)"/><path d="M854.8 181.0L881.2 226.7L828.4 226.7Z" fill="rgb(11, 15, 27)"/><path d="M854.8 181.0L881.2 226.7L828.4 226.7Z" fill="url(#gu)"/><path d="M854.8 181.0L907.6 181.0L881.2 226.7Z" fill="rgb(11, 15, 27)"/><path d="M854.8 181.0L907.6 181.0L881.2 226.7Z" fill="url(#gd)"/><path d="M907.6 181.0L934.0 226.7L881.2 226.7Z" fill="rgb(11, 15, 27)"/><path d="M907.6 181.0L934.0 226.7L881.2 226.7Z" fill="url(#gu)"/><path d="M907.6 181.0L960.4 181.0L934.0 226.7Z" fill="rgb(11, 15, 27)"/><path d="M907.6 181.0L960.4 181.0L934.0 226.7Z" fill="url(#gd)"/><path d="M960.4 181.0L986.8 226.7L934.0 226.7Z" fill="rgb(11, 15, 27)"/><path d="M960.4 181.0L986.8 226.7L934.0 226.7Z" fill="url(#gu)"/><path d="M960.4 181.0L1013.2 181.0L986.8 226.7Z" fill="rgb(11, 15, 27)"/><path d="M960.4 181.0L1013.2 181.0L986.8 226.7Z" fill="url(#gd)"/><path d="M1013.2 181.0L1039.6 226.7L986.8 226.7Z" fill="rgb(11, 15, 27)"/><path d="M1013.2 181.0L1039.6 226.7L986.8 226.7Z" fill="url(#gu)"/><path d="M1013.2 181.0L1066.0 181.0L1039.6 226.7Z" fill="rgb(11, 15, 27)"/><path d="M1013.2 181.0L1066.0 181.0L1039.6 226.7Z" fill="url(#gd)"/><path d="M1066.0 181.0L1092.4 226.7L1039.6 226.7Z" fill="rgb(11, 15, 27)"/><path d="M1066.0 181.0L1092.4 226.7L1039.6 226.7Z" fill="url(#gu)"/><path d="M1066.0 181.0L1118.8 181.0L1092.4 226.7Z" fill="rgb(11, 15, 27)"/><path d="M1066.0 181.0L1118.8 181.0L1092.4 226.7Z" fill="url(#gd)"/><path d="M-69.2 226.7L-42.8 272.4L-95.6 272.4Z" fill="rgb(10, 14, 23)"/><path d="M-69.2 226.7L-42.8 272.4L-95.6 272.4Z" fill="url(#gu)"/><path d="M-69.2 226.7L-16.4 226.7L-42.8 272.4Z" fill="rgb(10, 14, 23)"/><path d="M-69.2 226.7L-16.4 226.7L-42.8 272.4Z" fill="url(#gd)"/><path d="M-16.4 226.7L10.0 272.4L-42.8 272.4Z" fill="rgb(10, 14, 23)"/><path d="M-16.4 226.7L10.0 272.4L-42.8 272.4Z" fill="url(#gu)"/><path d="M-16.4 226.7L36.4 226.7L10.0 272.4Z" fill="rgb(10, 14, 23)"/><path d="M-16.4 226.7L36.4 226.7L10.0 272.4Z" fill="url(#gd)"/><path d="M36.4 226.7L62.8 272.4L10.0 272.4Z" fill="rgb(10, 14, 23)"/><path d="M36.4 226.7L62.8 272.4L10.0 272.4Z" fill="url(#gu)"/><path d="M36.4 226.7L89.2 226.7L62.8 272.4Z" fill="rgb(10, 14, 23)"/><path d="M36.4 226.7L89.2 226.7L62.8 272.4Z" fill="url(#gd)"/><path d="M89.2 226.7L115.6 272.4L62.8 272.4Z" fill="rgb(11, 15, 27)"/><path d="M89.2 226.7L115.6 272.4L62.8 272.4Z" fill="url(#gu)"/><path d="M89.2 226.7L142.0 226.7L115.6 272.4Z" fill="rgb(11, 15, 27)"/><path d="M89.2 226.7L142.0 226.7L115.6 272.4Z" fill="url(#gd)"/><path d="M142.0 226.7L168.4 272.4L115.6 272.4Z" fill="rgb(11, 15, 27)"/><path d="M142.0 226.7L168.4 272.4L115.6 272.4Z" fill="url(#gu)"/><path d="M142.0 226.7L194.8 226.7L168.4 272.4Z" fill="rgb(11, 15, 27)"/><path d="M142.0 226.7L194.8 226.7L168.4 272.4Z" fill="url(#gd)"/><path d="M194.8 226.7L221.2 272.4L168.4 272.4Z" fill="rgb(11, 15, 27)"/><path d="M194.8 226.7L221.2 272.4L168.4 272.4Z" fill="url(#gu)"/><path d="M194.8 226.7L247.6 226.7L221.2 272.4Z" fill="rgb(11, 15, 27)"/><path d="M194.8 226.7L247.6 226.7L221.2 272.4Z" fill="url(#gd)"/><path d="M247.6 226.7L274.0 272.4L221.2 272.4Z" fill="rgb(11, 15, 27)"/><path d="M247.6 226.7L274.0 272.4L221.2 272.4Z" fill="url(#gu)"/><path d="M247.6 226.7L300.4 226.7L274.0 272.4Z" fill="rgb(11, 15, 27)"/><path d="M247.6 226.7L300.4 226.7L274.0 272.4Z" fill="url(#gd)"/><path d="M300.4 226.7L326.8 272.4L274.0 272.4Z" fill="rgb(11, 15, 27)"/><path d="M300.4 226.7L326.8 272.4L274.0 272.4Z" fill="url(#gu)"/><path d="M300.4 226.7L353.2 226.7L326.8 272.4Z" fill="rgb(11, 15, 27)"/><path d="M300.4 226.7L353.2 226.7L326.8 272.4Z" fill="url(#gd)"/><path d="M353.2 226.7L379.6 272.4L326.8 272.4Z" fill="rgb(11, 15, 27)"/><path d="M353.2 226.7L379.6 272.4L326.8 272.4Z" fill="url(#gu)"/><path d="M353.2 226.7L406.0 226.7L379.6 272.4Z" fill="rgb(11, 15, 27)"/><path d="M353.2 226.7L406.0 226.7L379.6 272.4Z" fill="url(#gd)"/><path d="M406.0 226.7L432.4 272.4L379.6 272.4Z" fill="rgb(11, 15, 27)"/><path d="M406.0 226.7L432.4 272.4L379.6 272.4Z" fill="url(#gu)"/><path d="M406.0 226.7L458.8 226.7L432.4 272.4Z" fill="rgb(11, 15, 27)"/><path d="M406.0 226.7L458.8 226.7L432.4 272.4Z" fill="url(#gd)"/><path d="M458.8 226.7L485.2 272.4L432.4 272.4Z" fill="rgb(11, 15, 27)"/><path d="M458.8 226.7L485.2 272.4L432.4 272.4Z" fill="url(#gu)"/><path d="M458.8 226.7L511.6 226.7L485.2 272.4Z" fill="rgb(11, 15, 27)"/><path d="M458.8 226.7L511.6 226.7L485.2 272.4Z" fill="url(#gd)"/><path d="M511.6 226.7L538.0 272.4L485.2 272.4Z" fill="rgb(11, 15, 27)"/><path d="M511.6 226.7L538.0 272.4L485.2 272.4Z" fill="url(#gu)"/><path d="M511.6 226.7L564.4 226.7L538.0 272.4Z" fill="rgb(11, 15, 27)"/><path d="M511.6 226.7L564.4 226.7L538.0 272.4Z" fill="url(#gd)"/><path d="M564.4 226.7L590.8 272.4L538.0 272.4Z" fill="rgb(11, 15, 27)"/><path d="M564.4 226.7L590.8 272.4L538.0 272.4Z" fill="url(#gu)"/><path d="M564.4 226.7L617.2 226.7L590.8 272.4Z" fill="rgb(11, 15, 27)"/><path d="M564.4 226.7L617.2 226.7L590.8 272.4Z" fill="url(#gd)"/><path d="M617.2 226.7L643.6 272.4L590.8 272.4Z" fill="rgb(11, 15, 27)"/><path d="M617.2 226.7L643.6 272.4L590.8 272.4Z" fill="url(#gu)"/><path d="M617.2 226.7L670.0 226.7L643.6 272.4Z" fill="rgb(11, 15, 27)"/><path d="M617.2 226.7L670.0 226.7L643.6 272.4Z" fill="url(#gd)"/><path d="M670.0 226.7L696.4 272.4L643.6 272.4Z" fill="rgb(11, 15, 27)"/><path d="M670.0 226.7L696.4 272.4L643.6 272.4Z" fill="url(#gu)"/><path d="M670.0 226.7L722.8 226.7L696.4 272.4Z" fill="rgb(11, 15, 27)"/><path d="M670.0 226.7L722.8 226.7L696.4 272.4Z" fill="url(#gd)"/><path d="M722.8 226.7L749.2 272.4L696.4 272.4Z" fill="rgb(11, 15, 27)"/><path d="M722.8 226.7L749.2 272.4L696.4 272.4Z" fill="url(#gu)"/><path d="M722.8 226.7L775.6 226.7L749.2 272.4Z" fill="rgb(11, 15, 27)"/><path d="M722.8 226.7L775.6 226.7L749.2 272.4Z" fill="url(#gd)"/><path d="M775.6 226.7L802.0 272.4L749.2 272.4Z" fill="rgb(11, 15, 27)"/><path d="M775.6 226.7L802.0 272.4L749.2 272.4Z" fill="url(#gu)"/><path d="M775.6 226.7L828.4 226.7L802.0 272.4Z" fill="rgb(11, 15, 27)"/><path d="M775.6 226.7L828.4 226.7L802.0 272.4Z" fill="url(#gd)"/><path d="M828.4 226.7L854.8 272.4L802.0 272.4Z" fill="rgb(11, 15, 27)"/><path d="M828.4 226.7L854.8 272.4L802.0 272.4Z" fill="url(#gu)"/><path d="M828.4 226.7L881.2 226.7L854.8 272.4Z" fill="rgb(11, 15, 27)"/><path d="M828.4 226.7L881.2 226.7L854.8 272.4Z" fill="url(#gd)"/><path d="M881.2 226.7L907.6 272.4L854.8 272.4Z" fill="rgb(11, 15, 27)"/><path d="M881.2 226.7L907.6 272.4L854.8 272.4Z" fill="url(#gu)"/><path d="M881.2 226.7L934.0 226.7L907.6 272.4Z" fill="rgb(11, 15, 26)"/><path d="M881.2 226.7L934.0 226.7L907.6 272.4Z" fill="url(#gd)"/><path d="M934.0 226.7L960.4 272.4L907.6 272.4Z" fill="rgb(11, 15, 26)"/><path d="M934.0 226.7L960.4 272.4L907.6 272.4Z" fill="url(#gu)"/><path d="M934.0 226.7L986.8 226.7L960.4 272.4Z" fill="rgb(11, 15, 26)"/><path d="M934.0 226.7L986.8 226.7L960.4 272.4Z" fill="url(#gd)"/><path d="M986.8 226.7L1013.2 272.4L960.4 272.4Z" fill="rgb(11, 15, 26)"/><path d="M986.8 226.7L1013.2 272.4L960.4 272.4Z" fill="url(#gu)"/><path d="M986.8 226.7L1039.6 226.7L1013.2 272.4Z" fill="rgb(11, 15, 26)"/><path d="M986.8 226.7L1039.6 226.7L1013.2 272.4Z" fill="url(#gd)"/><path d="M1039.6 226.7L1066.0 272.4L1013.2 272.4Z" fill="rgb(11, 15, 26)"/><path d="M1039.6 226.7L1066.0 272.4L1013.2 272.4Z" fill="url(#gu)"/><path d="M1039.6 226.7L1092.4 226.7L1066.0 272.4Z" fill="rgb(11, 15, 26)"/><path d="M1039.6 226.7L1092.4 226.7L1066.0 272.4Z" fill="url(#gd)"/><path d="M1092.4 226.7L1118.8 272.4L1066.0 272.4Z" fill="rgb(11, 15, 26)"/><path d="M1092.4 226.7L1118.8 272.4L1066.0 272.4Z" fill="url(#gu)"/><path d="M1092.4 226.7L1145.2 226.7L1118.8 272.4Z" fill="rgb(11, 15, 26)"/><path d="M1092.4 226.7L1145.2 226.7L1118.8 272.4Z" fill="url(#gd)"/><path d="M-95.6 272.4L-69.2 318.1L-122.0 318.1Z" fill="rgb(10, 14, 23)"/><path d="M-95.6 272.4L-69.2 318.1L-122.0 318.1Z" fill="url(#gu)"/><path d="M-95.6 272.4L-42.8 272.4L-69.2 318.1Z" fill="rgb(10, 14, 23)"/><path d="M-95.6 272.4L-42.8 272.4L-69.2 318.1Z" fill="url(#gd)"/><path d="M-42.8 272.4L-16.4 318.1L-69.2 318.1Z" fill="rgb(10, 14, 23)"/><path d="M-42.8 272.4L-16.4 318.1L-69.2 318.1Z" fill="url(#gu)"/><path d="M-42.8 272.4L10.0 272.4L-16.4 318.1Z" fill="rgb(10, 14, 23)"/><path d="M-42.8 272.4L10.0 272.4L-16.4 318.1Z" fill="url(#gd)"/><path d="M10.0 272.4L36.4 318.1L-16.4 318.1Z" fill="rgb(10, 14, 23)"/><path d="M10.0 272.4L36.4 318.1L-16.4 318.1Z" fill="url(#gu)"/><path d="M10.0 272.4L62.8 272.4L36.4 318.1Z" fill="rgb(10, 14, 23)"/><path d="M10.0 272.4L62.8 272.4L36.4 318.1Z" fill="url(#gd)"/><path d="M62.8 272.4L89.2 318.1L36.4 318.1Z" fill="rgb(10, 14, 23)"/><path d="M62.8 272.4L89.2 318.1L36.4 318.1Z" fill="url(#gu)"/><path d="M62.8 272.4L115.6 272.4L89.2 318.1Z" fill="rgb(11, 15, 27)"/><path d="M62.8 272.4L115.6 272.4L89.2 318.1Z" fill="url(#gd)"/><path d="M115.6 272.4L142.0 318.1L89.2 318.1Z" fill="rgb(11, 15, 27)"/><path d="M115.6 272.4L142.0 318.1L89.2 318.1Z" fill="url(#gu)"/><path d="M115.6 272.4L168.4 272.4L142.0 318.1Z" fill="rgb(11, 15, 27)"/><path d="M115.6 272.4L168.4 272.4L142.0 318.1Z" fill="url(#gd)"/><path d="M168.4 272.4L194.8 318.1L142.0 318.1Z" fill="rgb(11, 15, 27)"/><path d="M168.4 272.4L194.8 318.1L142.0 318.1Z" fill="url(#gu)"/><path d="M168.4 272.4L221.2 272.4L194.8 318.1Z" fill="rgb(11, 15, 27)"/><path d="M168.4 272.4L221.2 272.4L194.8 318.1Z" fill="url(#gd)"/><path d="M221.2 272.4L247.6 318.1L194.8 318.1Z" fill="rgb(11, 15, 27)"/><path d="M221.2 272.4L247.6 318.1L194.8 318.1Z" fill="url(#gu)"/><path d="M221.2 272.4L274.0 272.4L247.6 318.1Z" fill="rgb(11, 15, 27)"/><path d="M221.2 272.4L274.0 272.4L247.6 318.1Z" fill="url(#gd)"/><path d="M274.0 272.4L300.4 318.1L247.6 318.1Z" fill="rgb(11, 15, 27)"/><path d="M274.0 272.4L300.4 318.1L247.6 318.1Z" fill="url(#gu)"/><path d="M274.0 272.4L326.8 272.4L300.4 318.1Z" fill="rgb(11, 15, 27)"/><path d="M274.0 272.4L326.8 272.4L300.4 318.1Z" fill="url(#gd)"/><path d="M326.8 272.4L353.2 318.1L300.4 318.1Z" fill="rgb(11, 15, 27)"/><path d="M326.8 272.4L353.2 318.1L300.4 318.1Z" fill="url(#gu)"/><path d="M326.8 272.4L379.6 272.4L353.2 318.1Z" fill="rgb(11, 15, 27)"/><path d="M326.8 272.4L379.6 272.4L353.2 318.1Z" fill="url(#gd)"/><path d="M379.6 272.4L406.0 318.1L353.2 318.1Z" fill="rgb(11, 15, 27)"/><path d="M379.6 272.4L406.0 318.1L353.2 318.1Z" fill="url(#gu)"/><path d="M379.6 272.4L432.4 272.4L406.0 318.1Z" fill="rgb(11, 15, 27)"/><path d="M379.6 272.4L432.4 272.4L406.0 318.1Z" fill="url(#gd)"/><path d="M432.4 272.4L458.8 318.1L406.0 318.1Z" fill="rgb(11, 15, 27)"/><path d="M432.4 272.4L458.8 318.1L406.0 318.1Z" fill="url(#gu)"/><path d="M432.4 272.4L485.2 272.4L458.8 318.1Z" fill="rgb(11, 15, 27)"/><path d="M432.4 272.4L485.2 272.4L458.8 318.1Z" fill="url(#gd)"/><path d="M485.2 272.4L511.6 318.1L458.8 318.1Z" fill="rgb(11, 15, 27)"/><path d="M485.2 272.4L511.6 318.1L458.8 318.1Z" fill="url(#gu)"/><path d="M485.2 272.4L538.0 272.4L511.6 318.1Z" fill="rgb(11, 15, 27)"/><path d="M485.2 272.4L538.0 272.4L511.6 318.1Z" fill="url(#gd)"/><path d="M538.0 272.4L564.4 318.1L511.6 318.1Z" fill="rgb(11, 15, 27)"/><path d="M538.0 272.4L564.4 318.1L511.6 318.1Z" fill="url(#gu)"/><path d="M538.0 272.4L590.8 272.4L564.4 318.1Z" fill="rgb(11, 15, 27)"/><path d="M538.0 272.4L590.8 272.4L564.4 318.1Z" fill="url(#gd)"/><path d="M590.8 272.4L617.2 318.1L564.4 318.1Z" fill="rgb(11, 15, 27)"/><path d="M590.8 272.4L617.2 318.1L564.4 318.1Z" fill="url(#gu)"/><path d="M590.8 272.4L643.6 272.4L617.2 318.1Z" fill="rgb(11, 15, 27)"/><path d="M590.8 272.4L643.6 272.4L617.2 318.1Z" fill="url(#gd)"/><path d="M643.6 272.4L670.0 318.1L617.2 318.1Z" fill="rgb(11, 15, 27)"/><path d="M643.6 272.4L670.0 318.1L617.2 318.1Z" fill="url(#gu)"/><path d="M643.6 272.4L696.4 272.4L670.0 318.1Z" fill="rgb(11, 15, 27)"/><path d="M643.6 272.4L696.4 272.4L670.0 318.1Z" fill="url(#gd)"/><path d="M696.4 272.4L722.8 318.1L670.0 318.1Z" fill="rgb(11, 15, 27)"/><path d="M696.4 272.4L722.8 318.1L670.0 318.1Z" fill="url(#gu)"/><path d="M696.4 272.4L749.2 272.4L722.8 318.1Z" fill="rgb(11, 15, 27)"/><path d="M696.4 272.4L749.2 272.4L722.8 318.1Z" fill="url(#gd)"/><path d="M749.2 272.4L775.6 318.1L722.8 318.1Z" fill="rgb(11, 15, 27)"/><path d="M749.2 272.4L775.6 318.1L722.8 318.1Z" fill="url(#gu)"/><path d="M749.2 272.4L802.0 272.4L775.6 318.1Z" fill="rgb(11, 15, 27)"/><path d="M749.2 272.4L802.0 272.4L775.6 318.1Z" fill="url(#gd)"/><path d="M802.0 272.4L828.4 318.1L775.6 318.1Z" fill="rgb(11, 15, 27)"/><path d="M802.0 272.4L828.4 318.1L775.6 318.1Z" fill="url(#gu)"/><path d="M802.0 272.4L854.8 272.4L828.4 318.1Z" fill="rgb(11, 15, 27)"/><path d="M802.0 272.4L854.8 272.4L828.4 318.1Z" fill="url(#gd)"/><path d="M854.8 272.4L881.2 318.1L828.4 318.1Z" fill="rgb(11, 15, 27)"/><path d="M854.8 272.4L881.2 318.1L828.4 318.1Z" fill="url(#gu)"/><path d="M854.8 272.4L907.6 272.4L881.2 318.1Z" fill="rgb(11, 15, 27)"/><path d="M854.8 272.4L907.6 272.4L881.2 318.1Z" fill="url(#gd)"/><path d="M907.6 272.4L934.0 318.1L881.2 318.1Z" fill="rgb(11, 15, 26)"/><path d="M907.6 272.4L934.0 318.1L881.2 318.1Z" fill="url(#gu)"/><path d="M907.6 272.4L960.4 272.4L934.0 318.1Z" fill="rgb(11, 15, 26)"/><path d="M907.6 272.4L960.4 272.4L934.0 318.1Z" fill="url(#gd)"/><path d="M960.4 272.4L986.8 318.1L934.0 318.1Z" fill="rgb(11, 15, 26)"/><path d="M960.4 272.4L986.8 318.1L934.0 318.1Z" fill="url(#gu)"/><path d="M960.4 272.4L1013.2 272.4L986.8 318.1Z" fill="rgb(11, 15, 26)"/><path d="M960.4 272.4L1013.2 272.4L986.8 318.1Z" fill="url(#gd)"/><path d="M1013.2 272.4L1039.6 318.1L986.8 318.1Z" fill="rgb(11, 15, 26)"/><path d="M1013.2 272.4L1039.6 318.1L986.8 318.1Z" fill="url(#gu)"/><path d="M1013.2 272.4L1066.0 272.4L1039.6 318.1Z" fill="rgb(11, 15, 26)"/><path d="M1013.2 272.4L1066.0 272.4L1039.6 318.1Z" fill="url(#gd)"/><path d="M1066.0 272.4L1092.4 318.1L1039.6 318.1Z" fill="rgb(11, 15, 26)"/><path d="M1066.0 272.4L1092.4 318.1L1039.6 318.1Z" fill="url(#gu)"/><path d="M1066.0 272.4L1118.8 272.4L1092.4 318.1Z" fill="rgb(11, 15, 26)"/><path d="M1066.0 272.4L1118.8 272.4L1092.4 318.1Z" fill="url(#gd)"/><path d="M-69.2 318.1L-42.8 363.8L-95.6 363.8Z" fill="rgb(10, 13, 22)"/><path d="M-69.2 318.1L-42.8 363.8L-95.6 363.8Z" fill="url(#gu)"/><path d="M-69.2 318.1L-16.4 318.1L-42.8 363.8Z" fill="rgb(10, 13, 22)"/><path d="M-69.2 318.1L-16.4 318.1L-42.8 363.8Z" fill="url(#gd)"/><path d="M-16.4 318.1L10.0 363.8L-42.8 363.8Z" fill="rgb(10, 13, 22)"/><path d="M-16.4 318.1L10.0 363.8L-42.8 363.8Z" fill="url(#gu)"/><path d="M-16.4 318.1L36.4 318.1L10.0 363.8Z" fill="rgb(10, 13, 22)"/><path d="M-16.4 318.1L36.4 318.1L10.0 363.8Z" fill="url(#gd)"/><path d="M36.4 318.1L62.8 363.8L10.0 363.8Z" fill="rgb(10, 13, 22)"/><path d="M36.4 318.1L62.8 363.8L10.0 363.8Z" fill="url(#gu)"/><path d="M36.4 318.1L89.2 318.1L62.8 363.8Z" fill="rgb(10, 13, 22)"/><path d="M36.4 318.1L89.2 318.1L62.8 363.8Z" fill="url(#gd)"/><path d="M89.2 318.1L115.6 363.8L62.8 363.8Z" fill="rgb(11, 15, 27)"/><path d="M89.2 318.1L115.6 363.8L62.8 363.8Z" fill="url(#gu)"/><path d="M89.2 318.1L142.0 318.1L115.6 363.8Z" fill="rgb(11, 15, 27)"/><path d="M89.2 318.1L142.0 318.1L115.6 363.8Z" fill="url(#gd)"/><path d="M142.0 318.1L168.4 363.8L115.6 363.8Z" fill="rgb(11, 15, 27)"/><path d="M142.0 318.1L168.4 363.8L115.6 363.8Z" fill="url(#gu)"/><path d="M142.0 318.1L194.8 318.1L168.4 363.8Z" fill="rgb(11, 15, 27)"/><path d="M142.0 318.1L194.8 318.1L168.4 363.8Z" fill="url(#gd)"/><path d="M194.8 318.1L221.2 363.8L168.4 363.8Z" fill="rgb(11, 15, 27)"/><path d="M194.8 318.1L221.2 363.8L168.4 363.8Z" fill="url(#gu)"/><path d="M194.8 318.1L247.6 318.1L221.2 363.8Z" fill="rgb(11, 15, 27)"/><path d="M194.8 318.1L247.6 318.1L221.2 363.8Z" fill="url(#gd)"/><path d="M247.6 318.1L274.0 363.8L221.2 363.8Z" fill="rgb(11, 15, 27)"/><path d="M247.6 318.1L274.0 363.8L221.2 363.8Z" fill="url(#gu)"/><path d="M247.6 318.1L300.4 318.1L274.0 363.8Z" fill="rgb(11, 15, 27)"/><path d="M247.6 318.1L300.4 318.1L274.0 363.8Z" fill="url(#gd)"/><path d="M300.4 318.1L326.8 363.8L274.0 363.8Z" fill="rgb(11, 15, 27)"/><path d="M300.4 318.1L326.8 363.8L274.0 363.8Z" fill="url(#gu)"/><path d="M300.4 318.1L353.2 318.1L326.8 363.8Z" fill="rgb(11, 15, 27)"/><path d="M300.4 318.1L353.2 318.1L326.8 363.8Z" fill="url(#gd)"/><path d="M353.2 318.1L379.6 363.8L326.8 363.8Z" fill="rgb(11, 15, 27)"/><path d="M353.2 318.1L379.6 363.8L326.8 363.8Z" fill="url(#gu)"/><path d="M353.2 318.1L406.0 318.1L379.6 363.8Z" fill="rgb(11, 15, 27)"/><path d="M353.2 318.1L406.0 318.1L379.6 363.8Z" fill="url(#gd)"/><path d="M406.0 318.1L432.4 363.8L379.6 363.8Z" fill="rgb(11, 15, 27)"/><path d="M406.0 318.1L432.4 363.8L379.6 363.8Z" fill="url(#gu)"/><path d="M406.0 318.1L458.8 318.1L432.4 363.8Z" fill="rgb(11, 15, 27)"/><path d="M406.0 318.1L458.8 318.1L432.4 363.8Z" fill="url(#gd)"/><path d="M458.8 318.1L485.2 363.8L432.4 363.8Z" fill="rgb(11, 15, 27)"/><path d="M458.8 318.1L485.2 363.8L432.4 363.8Z" fill="url(#gu)"/><path d="M458.8 318.1L511.6 318.1L485.2 363.8Z" fill="rgb(11, 15, 27)"/><path d="M458.8 318.1L511.6 318.1L485.2 363.8Z" fill="url(#gd)"/><path d="M511.6 318.1L538.0 363.8L485.2 363.8Z" fill="rgb(11, 15, 27)"/><path d="M511.6 318.1L538.0 363.8L485.2 363.8Z" fill="url(#gu)"/><path d="M511.6 318.1L564.4 318.1L538.0 363.8Z" fill="rgb(11, 15, 27)"/><path d="M511.6 318.1L564.4 318.1L538.0 363.8Z" fill="url(#gd)"/><path d="M564.4 318.1L590.8 363.8L538.0 363.8Z" fill="rgb(11, 15, 27)"/><path d="M564.4 318.1L590.8 363.8L538.0 363.8Z" fill="url(#gu)"/><path d="M564.4 318.1L617.2 318.1L590.8 363.8Z" fill="rgb(11, 15, 27)"/><path d="M564.4 318.1L617.2 318.1L590.8 363.8Z" fill="url(#gd)"/><path d="M617.2 318.1L643.6 363.8L590.8 363.8Z" fill="rgb(11, 15, 27)"/><path d="M617.2 318.1L643.6 363.8L590.8 363.8Z" fill="url(#gu)"/><path d="M617.2 318.1L670.0 318.1L643.6 363.8Z" fill="rgb(11, 15, 27)"/><path d="M617.2 318.1L670.0 318.1L643.6 363.8Z" fill="url(#gd)"/><path d="M670.0 318.1L696.4 363.8L643.6 363.8Z" fill="rgb(11, 15, 27)"/><path d="M670.0 318.1L696.4 363.8L643.6 363.8Z" fill="url(#gu)"/><path d="M670.0 318.1L722.8 318.1L696.4 363.8Z" fill="rgb(11, 15, 27)"/><path d="M670.0 318.1L722.8 318.1L696.4 363.8Z" fill="url(#gd)"/><path d="M722.8 318.1L749.2 363.8L696.4 363.8Z" fill="rgb(11, 15, 27)"/><path d="M722.8 318.1L749.2 363.8L696.4 363.8Z" fill="url(#gu)"/><path d="M722.8 318.1L775.6 318.1L749.2 363.8Z" fill="rgb(11, 15, 27)"/><path d="M722.8 318.1L775.6 318.1L749.2 363.8Z" fill="url(#gd)"/><path d="M775.6 318.1L802.0 363.8L749.2 363.8Z" fill="rgb(11, 15, 27)"/><path d="M775.6 318.1L802.0 363.8L749.2 363.8Z" fill="url(#gu)"/><path d="M775.6 318.1L828.4 318.1L802.0 363.8Z" fill="rgb(11, 15, 27)"/><path d="M775.6 318.1L828.4 318.1L802.0 363.8Z" fill="url(#gd)"/><path d="M828.4 318.1L854.8 363.8L802.0 363.8Z" fill="rgb(11, 15, 27)"/><path d="M828.4 318.1L854.8 363.8L802.0 363.8Z" fill="url(#gu)"/><path d="M828.4 318.1L881.2 318.1L854.8 363.8Z" fill="rgb(11, 15, 27)"/><path d="M828.4 318.1L881.2 318.1L854.8 363.8Z" fill="url(#gd)"/><path d="M881.2 318.1L907.6 363.8L854.8 363.8Z" fill="rgb(11, 15, 27)"/><path d="M881.2 318.1L907.6 363.8L854.8 363.8Z" fill="url(#gu)"/><path d="M881.2 318.1L934.0 318.1L907.6 363.8Z" fill="rgb(11, 15, 26)"/><path d="M881.2 318.1L934.0 318.1L907.6 363.8Z" fill="url(#gd)"/><path d="M934.0 318.1L960.4 363.8L907.6 363.8Z" fill="rgb(11, 15, 25)"/><path d="M934.0 318.1L960.4 363.8L907.6 363.8Z" fill="url(#gu)"/><path d="M934.0 318.1L986.8 318.1L960.4 363.8Z" fill="rgb(11, 15, 26)"/><path d="M934.0 318.1L986.8 318.1L960.4 363.8Z" fill="url(#gd)"/><path d="M986.8 318.1L1013.2 363.8L960.4 363.8Z" fill="rgb(11, 15, 25)"/><path d="M986.8 318.1L1013.2 363.8L960.4 363.8Z" fill="url(#gu)"/><path d="M986.8 318.1L1039.6 318.1L1013.2 363.8Z" fill="rgb(11, 15, 26)"/><path d="M986.8 318.1L1039.6 318.1L1013.2 363.8Z" fill="url(#gd)"/><path d="M1039.6 318.1L1066.0 363.8L1013.2 363.8Z" fill="rgb(11, 15, 25)"/><path d="M1039.6 318.1L1066.0 363.8L1013.2 363.8Z" fill="url(#gu)"/><path d="M1039.6 318.1L1092.4 318.1L1066.0 363.8Z" fill="rgb(11, 15, 26)"/><path d="M1039.6 318.1L1092.4 318.1L1066.0 363.8Z" fill="url(#gd)"/><path d="M1092.4 318.1L1118.8 363.8L1066.0 363.8Z" fill="rgb(11, 15, 25)"/><path d="M1092.4 318.1L1118.8 363.8L1066.0 363.8Z" fill="url(#gu)"/><path d="M1092.4 318.1L1145.2 318.1L1118.8 363.8Z" fill="rgb(11, 15, 26)"/><path d="M1092.4 318.1L1145.2 318.1L1118.8 363.8Z" fill="url(#gd)"/><path d="M-95.6 363.8L-69.2 409.5L-122.0 409.5Z" fill="rgb(10, 13, 22)"/><path d="M-95.6 363.8L-69.2 409.5L-122.0 409.5Z" fill="url(#gu)"/><path d="M-95.6 363.8L-42.8 363.8L-69.2 409.5Z" fill="rgb(10, 13, 22)"/><path d="M-95.6 363.8L-42.8 363.8L-69.2 409.5Z" fill="url(#gd)"/><path d="M-42.8 363.8L-16.4 409.5L-69.2 409.5Z" fill="rgb(10, 13, 22)"/><path d="M-42.8 363.8L-16.4 409.5L-69.2 409.5Z" fill="url(#gu)"/><path d="M-42.8 363.8L10.0 363.8L-16.4 409.5Z" fill="rgb(10, 13, 22)"/><path d="M-42.8 363.8L10.0 363.8L-16.4 409.5Z" fill="url(#gd)"/><path d="M10.0 363.8L36.4 409.5L-16.4 409.5Z" fill="rgb(10, 13, 22)"/><path d="M10.0 363.8L36.4 409.5L-16.4 409.5Z" fill="url(#gu)"/><path d="M10.0 363.8L62.8 363.8L36.4 409.5Z" fill="rgb(10, 13, 22)"/><path d="M10.0 363.8L62.8 363.8L36.4 409.5Z" fill="url(#gd)"/><path d="M62.8 363.8L89.2 409.5L36.4 409.5Z" fill="rgb(10, 13, 22)"/><path d="M62.8 363.8L89.2 409.5L36.4 409.5Z" fill="url(#gu)"/><path d="M62.8 363.8L115.6 363.8L89.2 409.5Z" fill="rgb(11, 15, 27)"/><path d="M62.8 363.8L115.6 363.8L89.2 409.5Z" fill="url(#gd)"/><path d="M115.6 363.8L142.0 409.5L89.2 409.5Z" fill="rgb(11, 15, 27)"/><path d="M115.6 363.8L142.0 409.5L89.2 409.5Z" fill="url(#gu)"/><path d="M115.6 363.8L168.4 363.8L142.0 409.5Z" fill="rgb(11, 15, 27)"/><path d="M115.6 363.8L168.4 363.8L142.0 409.5Z" fill="url(#gd)"/><path d="M168.4 363.8L194.8 409.5L142.0 409.5Z" fill="rgb(11, 15, 27)"/><path d="M168.4 363.8L194.8 409.5L142.0 409.5Z" fill="url(#gu)"/><path d="M168.4 363.8L221.2 363.8L194.8 409.5Z" fill="rgb(11, 15, 27)"/><path d="M168.4 363.8L221.2 363.8L194.8 409.5Z" fill="url(#gd)"/><path d="M221.2 363.8L247.6 409.5L194.8 409.5Z" fill="rgb(11, 15, 27)"/><path d="M221.2 363.8L247.6 409.5L194.8 409.5Z" fill="url(#gu)"/><path d="M221.2 363.8L274.0 363.8L247.6 409.5Z" fill="rgb(11, 15, 27)"/><path d="M221.2 363.8L274.0 363.8L247.6 409.5Z" fill="url(#gd)"/><path d="M274.0 363.8L300.4 409.5L247.6 409.5Z" fill="rgb(11, 15, 27)"/><path d="M274.0 363.8L300.4 409.5L247.6 409.5Z" fill="url(#gu)"/><path d="M274.0 363.8L326.8 363.8L300.4 409.5Z" fill="rgb(11, 15, 27)"/><path d="M274.0 363.8L326.8 363.8L300.4 409.5Z" fill="url(#gd)"/><path d="M326.8 363.8L353.2 409.5L300.4 409.5Z" fill="rgb(11, 15, 27)"/><path d="M326.8 363.8L353.2 409.5L300.4 409.5Z" fill="url(#gu)"/><path d="M326.8 363.8L379.6 363.8L353.2 409.5Z" fill="rgb(11, 15, 27)"/><path d="M326.8 363.8L379.6 363.8L353.2 409.5Z" fill="url(#gd)"/><path d="M379.6 363.8L406.0 409.5L353.2 409.5Z" fill="rgb(11, 15, 27)"/><path d="M379.6 363.8L406.0 409.5L353.2 409.5Z" fill="url(#gu)"/><path d="M379.6 363.8L432.4 363.8L406.0 409.5Z" fill="rgb(11, 15, 27)"/><path d="M379.6 363.8L432.4 363.8L406.0 409.5Z" fill="url(#gd)"/><path d="M432.4 363.8L458.8 409.5L406.0 409.5Z" fill="rgb(11, 15, 27)"/><path d="M432.4 363.8L458.8 409.5L406.0 409.5Z" fill="url(#gu)"/><path d="M432.4 363.8L485.2 363.8L458.8 409.5Z" fill="rgb(11, 15, 27)"/><path d="M432.4 363.8L485.2 363.8L458.8 409.5Z" fill="url(#gd)"/><path d="M485.2 363.8L511.6 409.5L458.8 409.5Z" fill="rgb(11, 15, 27)"/><path d="M485.2 363.8L511.6 409.5L458.8 409.5Z" fill="url(#gu)"/><path d="M485.2 363.8L538.0 363.8L511.6 409.5Z" fill="rgb(11, 15, 27)"/><path d="M485.2 363.8L538.0 363.8L511.6 409.5Z" fill="url(#gd)"/><path d="M538.0 363.8L564.4 409.5L511.6 409.5Z" fill="rgb(11, 15, 27)"/><path d="M538.0 363.8L564.4 409.5L511.6 409.5Z" fill="url(#gu)"/><path d="M538.0 363.8L590.8 363.8L564.4 409.5Z" fill="rgb(11, 15, 27)"/><path d="M538.0 363.8L590.8 363.8L564.4 409.5Z" fill="url(#gd)"/><path d="M590.8 363.8L617.2 409.5L564.4 409.5Z" fill="rgb(11, 15, 27)"/><path d="M590.8 363.8L617.2 409.5L564.4 409.5Z" fill="url(#gu)"/><path d="M590.8 363.8L643.6 363.8L617.2 409.5Z" fill="rgb(11, 15, 27)"/><path d="M590.8 363.8L643.6 363.8L617.2 409.5Z" fill="url(#gd)"/><path d="M643.6 363.8L670.0 409.5L617.2 409.5Z" fill="rgb(11, 15, 27)"/><path d="M643.6 363.8L670.0 409.5L617.2 409.5Z" fill="url(#gu)"/><path d="M643.6 363.8L696.4 363.8L670.0 409.5Z" fill="rgb(11, 15, 27)"/><path d="M643.6 363.8L696.4 363.8L670.0 409.5Z" fill="url(#gd)"/><path d="M696.4 363.8L722.8 409.5L670.0 409.5Z" fill="rgb(11, 15, 27)"/><path d="M696.4 363.8L722.8 409.5L670.0 409.5Z" fill="url(#gu)"/><path d="M696.4 363.8L749.2 363.8L722.8 409.5Z" fill="rgb(11, 15, 27)"/><path d="M696.4 363.8L749.2 363.8L722.8 409.5Z" fill="url(#gd)"/><path d="M749.2 363.8L775.6 409.5L722.8 409.5Z" fill="rgb(11, 15, 27)"/><path d="M749.2 363.8L775.6 409.5L722.8 409.5Z" fill="url(#gu)"/><path d="M749.2 363.8L802.0 363.8L775.6 409.5Z" fill="rgb(11, 15, 27)"/><path d="M749.2 363.8L802.0 363.8L775.6 409.5Z" fill="url(#gd)"/><path d="M802.0 363.8L828.4 409.5L775.6 409.5Z" fill="rgb(11, 15, 27)"/><path d="M802.0 363.8L828.4 409.5L775.6 409.5Z" fill="url(#gu)"/><path d="M802.0 363.8L854.8 363.8L828.4 409.5Z" fill="rgb(11, 15, 27)"/><path d="M802.0 363.8L854.8 363.8L828.4 409.5Z" fill="url(#gd)"/><path d="M854.8 363.8L881.2 409.5L828.4 409.5Z" fill="rgb(11, 15, 27)"/><path d="M854.8 363.8L881.2 409.5L828.4 409.5Z" fill="url(#gu)"/><path d="M854.8 363.8L907.6 363.8L881.2 409.5Z" fill="rgb(11, 15, 27)"/><path d="M854.8 363.8L907.6 363.8L881.2 409.5Z" fill="url(#gd)"/><path d="M907.6 363.8L934.0 409.5L881.2 409.5Z" fill="rgb(10, 14, 25)"/><path d="M907.6 363.8L934.0 409.5L881.2 409.5Z" fill="url(#gu)"/><path d="M907.6 363.8L960.4 363.8L934.0 409.5Z" fill="rgb(10, 15, 25)"/><path d="M907.6 363.8L960.4 363.8L934.0 409.5Z" fill="url(#gd)"/><path d="M960.4 363.8L986.8 409.5L934.0 409.5Z" fill="rgb(10, 14, 25)"/><path d="M960.4 363.8L986.8 409.5L934.0 409.5Z" fill="url(#gu)"/><path d="M960.4 363.8L1013.2 363.8L986.8 409.5Z" fill="rgb(10, 15, 25)"/><path d="M960.4 363.8L1013.2 363.8L986.8 409.5Z" fill="url(#gd)"/><path d="M1013.2 363.8L1039.6 409.5L986.8 409.5Z" fill="rgb(10, 14, 25)"/><path d="M1013.2 363.8L1039.6 409.5L986.8 409.5Z" fill="url(#gu)"/><path d="M1013.2 363.8L1066.0 363.8L1039.6 409.5Z" fill="rgb(10, 15, 25)"/><path d="M1013.2 363.8L1066.0 363.8L1039.6 409.5Z" fill="url(#gd)"/><path d="M1066.0 363.8L1092.4 409.5L1039.6 409.5Z" fill="rgb(10, 14, 25)"/><path d="M1066.0 363.8L1092.4 409.5L1039.6 409.5Z" fill="url(#gu)"/><path d="M1066.0 363.8L1118.8 363.8L1092.4 409.5Z" fill="rgb(10, 15, 25)"/><path d="M1066.0 363.8L1118.8 363.8L1092.4 409.5Z" fill="url(#gd)"/><path d="M-69.2 409.5L-42.8 455.2L-95.6 455.2Z" fill="rgb(10, 13, 22)"/><path d="M-69.2 409.5L-42.8 455.2L-95.6 455.2Z" fill="url(#gu)"/><path d="M-69.2 409.5L-16.4 409.5L-42.8 455.2Z" fill="rgb(10, 13, 22)"/><path d="M-69.2 409.5L-16.4 409.5L-42.8 455.2Z" fill="url(#gd)"/><path d="M-16.4 409.5L10.0 455.2L-42.8 455.2Z" fill="rgb(10, 13, 22)"/><path d="M-16.4 409.5L10.0 455.2L-42.8 455.2Z" fill="url(#gu)"/><path d="M-16.4 409.5L36.4 409.5L10.0 455.2Z" fill="rgb(10, 13, 22)"/><path d="M-16.4 409.5L36.4 409.5L10.0 455.2Z" fill="url(#gd)"/><path d="M36.4 409.5L62.8 455.2L10.0 455.2Z" fill="rgb(10, 13, 22)"/><path d="M36.4 409.5L62.8 455.2L10.0 455.2Z" fill="url(#gu)"/><path d="M36.4 409.5L89.2 409.5L62.8 455.2Z" fill="rgb(10, 13, 22)"/><path d="M36.4 409.5L89.2 409.5L62.8 455.2Z" fill="url(#gd)"/><path d="M89.2 409.5L115.6 455.2L62.8 455.2Z" fill="rgb(11, 15, 27)"/><path d="M89.2 409.5L115.6 455.2L62.8 455.2Z" fill="url(#gu)"/><path d="M89.2 409.5L142.0 409.5L115.6 455.2Z" fill="rgb(11, 15, 27)"/><path d="M89.2 409.5L142.0 409.5L115.6 455.2Z" fill="url(#gd)"/><path d="M142.0 409.5L168.4 455.2L115.6 455.2Z" fill="rgb(11, 15, 27)"/><path d="M142.0 409.5L168.4 455.2L115.6 455.2Z" fill="url(#gu)"/><path d="M142.0 409.5L194.8 409.5L168.4 455.2Z" fill="rgb(11, 15, 27)"/><path d="M142.0 409.5L194.8 409.5L168.4 455.2Z" fill="url(#gd)"/><path d="M194.8 409.5L221.2 455.2L168.4 455.2Z" fill="rgb(11, 15, 27)"/><path d="M194.8 409.5L221.2 455.2L168.4 455.2Z" fill="url(#gu)"/><path d="M194.8 409.5L247.6 409.5L221.2 455.2Z" fill="rgb(11, 15, 27)"/><path d="M194.8 409.5L247.6 409.5L221.2 455.2Z" fill="url(#gd)"/><path d="M247.6 409.5L274.0 455.2L221.2 455.2Z" fill="rgb(11, 15, 27)"/><path d="M247.6 409.5L274.0 455.2L221.2 455.2Z" fill="url(#gu)"/><path d="M247.6 409.5L300.4 409.5L274.0 455.2Z" fill="rgb(11, 15, 27)"/><path d="M247.6 409.5L300.4 409.5L274.0 455.2Z" fill="url(#gd)"/><path d="M300.4 409.5L326.8 455.2L274.0 455.2Z" fill="rgb(11, 15, 27)"/><path d="M300.4 409.5L326.8 455.2L274.0 455.2Z" fill="url(#gu)"/><path d="M300.4 409.5L353.2 409.5L326.8 455.2Z" fill="rgb(11, 15, 27)"/><path d="M300.4 409.5L353.2 409.5L326.8 455.2Z" fill="url(#gd)"/><path d="M353.2 409.5L379.6 455.2L326.8 455.2Z" fill="rgb(11, 15, 27)"/><path d="M353.2 409.5L379.6 455.2L326.8 455.2Z" fill="url(#gu)"/><path d="M353.2 409.5L406.0 409.5L379.6 455.2Z" fill="rgb(11, 15, 27)"/><path d="M353.2 409.5L406.0 409.5L379.6 455.2Z" fill="url(#gd)"/><path d="M406.0 409.5L432.4 455.2L379.6 455.2Z" fill="rgb(11, 15, 27)"/><path d="M406.0 409.5L432.4 455.2L379.6 455.2Z" fill="url(#gu)"/><path d="M406.0 409.5L458.8 409.5L432.4 455.2Z" fill="rgb(11, 15, 27)"/><path d="M406.0 409.5L458.8 409.5L432.4 455.2Z" fill="url(#gd)"/><path d="M458.8 409.5L485.2 455.2L432.4 455.2Z" fill="rgb(11, 15, 27)"/><path d="M458.8 409.5L485.2 455.2L432.4 455.2Z" fill="url(#gu)"/><path d="M458.8 409.5L511.6 409.5L485.2 455.2Z" fill="rgb(11, 15, 27)"/><path d="M458.8 409.5L511.6 409.5L485.2 455.2Z" fill="url(#gd)"/><path d="M511.6 409.5L538.0 455.2L485.2 455.2Z" fill="rgb(11, 15, 27)"/><path d="M511.6 409.5L538.0 455.2L485.2 455.2Z" fill="url(#gu)"/><path d="M511.6 409.5L564.4 409.5L538.0 455.2Z" fill="rgb(11, 15, 27)"/><path d="M511.6 409.5L564.4 409.5L538.0 455.2Z" fill="url(#gd)"/><path d="M564.4 409.5L590.8 455.2L538.0 455.2Z" fill="rgb(11, 15, 27)"/><path d="M564.4 409.5L590.8 455.2L538.0 455.2Z" fill="url(#gu)"/><path d="M564.4 409.5L617.2 409.5L590.8 455.2Z" fill="rgb(11, 15, 27)"/><path d="M564.4 409.5L617.2 409.5L590.8 455.2Z" fill="url(#gd)"/><path d="M617.2 409.5L643.6 455.2L590.8 455.2Z" fill="rgb(11, 15, 27)"/><path d="M617.2 409.5L643.6 455.2L590.8 455.2Z" fill="url(#gu)"/><path d="M617.2 409.5L670.0 409.5L643.6 455.2Z" fill="rgb(11, 15, 27)"/><path d="M617.2 409.5L670.0 409.5L643.6 455.2Z" fill="url(#gd)"/><path d="M670.0 409.5L696.4 455.2L643.6 455.2Z" fill="rgb(11, 15, 27)"/><path d="M670.0 409.5L696.4 455.2L643.6 455.2Z" fill="url(#gu)"/><path d="M670.0 409.5L722.8 409.5L696.4 455.2Z" fill="rgb(11, 15, 27)"/><path d="M670.0 409.5L722.8 409.5L696.4 455.2Z" fill="url(#gd)"/><path d="M722.8 409.5L749.2 455.2L696.4 455.2Z" fill="rgb(11, 15, 27)"/><path d="M722.8 409.5L749.2 455.2L696.4 455.2Z" fill="url(#gu)"/><path d="M722.8 409.5L775.6 409.5L749.2 455.2Z" fill="rgb(11, 15, 27)"/><path d="M722.8 409.5L775.6 409.5L749.2 455.2Z" fill="url(#gd)"/><path d="M775.6 409.5L802.0 455.2L749.2 455.2Z" fill="rgb(11, 15, 27)"/><path d="M775.6 409.5L802.0 455.2L749.2 455.2Z" fill="url(#gu)"/><path d="M775.6 409.5L828.4 409.5L802.0 455.2Z" fill="rgb(11, 15, 27)"/><path d="M775.6 409.5L828.4 409.5L802.0 455.2Z" fill="url(#gd)"/><path d="M828.4 409.5L854.8 455.2L802.0 455.2Z" fill="rgb(11, 15, 27)"/><path d="M828.4 409.5L854.8 455.2L802.0 455.2Z" fill="url(#gu)"/><path d="M828.4 409.5L881.2 409.5L854.8 455.2Z" fill="rgb(11, 15, 27)"/><path d="M828.4 409.5L881.2 409.5L854.8 455.2Z" fill="url(#gd)"/><path d="M881.2 409.5L907.6 455.2L854.8 455.2Z" fill="rgb(11, 15, 27)"/><path d="M881.2 409.5L907.6 455.2L854.8 455.2Z" fill="url(#gu)"/><path d="M881.2 409.5L934.0 409.5L907.6 455.2Z" fill="rgb(17, 34, 74)"/><path d="M881.2 409.5L934.0 409.5L907.6 455.2Z" fill="url(#gd)"/><path d="M934.0 409.5L960.4 455.2L907.6 455.2Z" fill="rgb(17, 34, 74)"/><path d="M934.0 409.5L960.4 455.2L907.6 455.2Z" fill="url(#gu)"/><path d="M934.0 409.5L986.8 409.5L960.4 455.2Z" fill="rgb(17, 34, 74)"/><path d="M934.0 409.5L986.8 409.5L960.4 455.2Z" fill="url(#gd)"/><path d="M986.8 409.5L1013.2 455.2L960.4 455.2Z" fill="rgb(17, 34, 74)"/><path d="M986.8 409.5L1013.2 455.2L960.4 455.2Z" fill="url(#gu)"/><path d="M986.8 409.5L1039.6 409.5L1013.2 455.2Z" fill="rgb(17, 34, 74)"/><path d="M986.8 409.5L1039.6 409.5L1013.2 455.2Z" fill="url(#gd)"/><path d="M1039.6 409.5L1066.0 455.2L1013.2 455.2Z" fill="rgb(17, 34, 74)"/><path d="M1039.6 409.5L1066.0 455.2L1013.2 455.2Z" fill="url(#gu)"/><path d="M1039.6 409.5L1092.4 409.5L1066.0 455.2Z" fill="rgb(17, 34, 74)"/><path d="M1039.6 409.5L1092.4 409.5L1066.0 455.2Z" fill="url(#gd)"/><path d="M1092.4 409.5L1118.8 455.2L1066.0 455.2Z" fill="rgb(17, 34, 74)"/><path d="M1092.4 409.5L1118.8 455.2L1066.0 455.2Z" fill="url(#gu)"/><path d="M1092.4 409.5L1145.2 409.5L1118.8 455.2Z" fill="rgb(17, 34, 74)"/><path d="M1092.4 409.5L1145.2 409.5L1118.8 455.2Z" fill="url(#gd)"/><path d="M-95.6 455.2L-69.2 500.9L-122.0 500.9Z" fill="rgb(10, 13, 22)"/><path d="M-95.6 455.2L-69.2 500.9L-122.0 500.9Z" fill="url(#gu)"/><path d="M-95.6 455.2L-42.8 455.2L-69.2 500.9Z" fill="rgb(10, 13, 22)"/><path d="M-95.6 455.2L-42.8 455.2L-69.2 500.9Z" fill="url(#gd)"/><path d="M-42.8 455.2L-16.4 500.9L-69.2 500.9Z" fill="rgb(10, 13, 22)"/><path d="M-42.8 455.2L-16.4 500.9L-69.2 500.9Z" fill="url(#gu)"/><path d="M-42.8 455.2L10.0 455.2L-16.4 500.9Z" fill="rgb(10, 13, 22)"/><path d="M-42.8 455.2L10.0 455.2L-16.4 500.9Z" fill="url(#gd)"/><path d="M10.0 455.2L36.4 500.9L-16.4 500.9Z" fill="rgb(10, 13, 22)"/><path d="M10.0 455.2L36.4 500.9L-16.4 500.9Z" fill="url(#gu)"/><path d="M10.0 455.2L62.8 455.2L36.4 500.9Z" fill="rgb(10, 13, 22)"/><path d="M10.0 455.2L62.8 455.2L36.4 500.9Z" fill="url(#gd)"/><path d="M62.8 455.2L89.2 500.9L36.4 500.9Z" fill="rgb(10, 13, 22)"/><path d="M62.8 455.2L89.2 500.9L36.4 500.9Z" fill="url(#gu)"/><path d="M62.8 455.2L115.6 455.2L89.2 500.9Z" fill="rgb(11, 15, 27)"/><path d="M62.8 455.2L115.6 455.2L89.2 500.9Z" fill="url(#gd)"/><path d="M115.6 455.2L142.0 500.9L89.2 500.9Z" fill="rgb(11, 15, 27)"/><path d="M115.6 455.2L142.0 500.9L89.2 500.9Z" fill="url(#gu)"/><path d="M115.6 455.2L168.4 455.2L142.0 500.9Z" fill="rgb(11, 15, 27)"/><path d="M115.6 455.2L168.4 455.2L142.0 500.9Z" fill="url(#gd)"/><path d="M168.4 455.2L194.8 500.9L142.0 500.9Z" fill="rgb(11, 15, 27)"/><path d="M168.4 455.2L194.8 500.9L142.0 500.9Z" fill="url(#gu)"/><path d="M168.4 455.2L221.2 455.2L194.8 500.9Z" fill="rgb(11, 15, 27)"/><path d="M168.4 455.2L221.2 455.2L194.8 500.9Z" fill="url(#gd)"/><path d="M221.2 455.2L247.6 500.9L194.8 500.9Z" fill="rgb(11, 15, 27)"/><path d="M221.2 455.2L247.6 500.9L194.8 500.9Z" fill="url(#gu)"/><path d="M221.2 455.2L274.0 455.2L247.6 500.9Z" fill="rgb(11, 15, 27)"/><path d="M221.2 455.2L274.0 455.2L247.6 500.9Z" fill="url(#gd)"/><path d="M274.0 455.2L300.4 500.9L247.6 500.9Z" fill="rgb(11, 15, 27)"/><path d="M274.0 455.2L300.4 500.9L247.6 500.9Z" fill="url(#gu)"/><path d="M274.0 455.2L326.8 455.2L300.4 500.9Z" fill="rgb(11, 15, 27)"/><path d="M274.0 455.2L326.8 455.2L300.4 500.9Z" fill="url(#gd)"/><path d="M326.8 455.2L353.2 500.9L300.4 500.9Z" fill="rgb(11, 15, 27)"/><path d="M326.8 455.2L353.2 500.9L300.4 500.9Z" fill="url(#gu)"/><path d="M326.8 455.2L379.6 455.2L353.2 500.9Z" fill="rgb(11, 15, 27)"/><path d="M326.8 455.2L379.6 455.2L353.2 500.9Z" fill="url(#gd)"/><path d="M379.6 455.2L406.0 500.9L353.2 500.9Z" fill="rgb(11, 15, 27)"/><path d="M379.6 455.2L406.0 500.9L353.2 500.9Z" fill="url(#gu)"/><path d="M379.6 455.2L432.4 455.2L406.0 500.9Z" fill="rgb(11, 15, 27)"/><path d="M379.6 455.2L432.4 455.2L406.0 500.9Z" fill="url(#gd)"/><path d="M432.4 455.2L458.8 500.9L406.0 500.9Z" fill="rgb(11, 15, 27)"/><path d="M432.4 455.2L458.8 500.9L406.0 500.9Z" fill="url(#gu)"/><path d="M432.4 455.2L485.2 455.2L458.8 500.9Z" fill="rgb(11, 15, 27)"/><path d="M432.4 455.2L485.2 455.2L458.8 500.9Z" fill="url(#gd)"/><path d="M485.2 455.2L511.6 500.9L458.8 500.9Z" fill="rgb(11, 15, 27)"/><path d="M485.2 455.2L511.6 500.9L458.8 500.9Z" fill="url(#gu)"/><path d="M485.2 455.2L538.0 455.2L511.6 500.9Z" fill="rgb(11, 15, 27)"/><path d="M485.2 455.2L538.0 455.2L511.6 500.9Z" fill="url(#gd)"/><path d="M538.0 455.2L564.4 500.9L511.6 500.9Z" fill="rgb(11, 15, 27)"/><path d="M538.0 455.2L564.4 500.9L511.6 500.9Z" fill="url(#gu)"/><path d="M538.0 455.2L590.8 455.2L564.4 500.9Z" fill="rgb(11, 15, 27)"/><path d="M538.0 455.2L590.8 455.2L564.4 500.9Z" fill="url(#gd)"/><path d="M590.8 455.2L617.2 500.9L564.4 500.9Z" fill="rgb(11, 15, 27)"/><path d="M590.8 455.2L617.2 500.9L564.4 500.9Z" fill="url(#gu)"/><path d="M590.8 455.2L643.6 455.2L617.2 500.9Z" fill="rgb(11, 15, 27)"/><path d="M590.8 455.2L643.6 455.2L617.2 500.9Z" fill="url(#gd)"/><path d="M643.6 455.2L670.0 500.9L617.2 500.9Z" fill="rgb(11, 15, 27)"/><path d="M643.6 455.2L670.0 500.9L617.2 500.9Z" fill="url(#gu)"/><path d="M643.6 455.2L696.4 455.2L670.0 500.9Z" fill="rgb(11, 15, 27)"/><path d="M643.6 455.2L696.4 455.2L670.0 500.9Z" fill="url(#gd)"/><path d="M696.4 455.2L722.8 500.9L670.0 500.9Z" fill="rgb(11, 15, 27)"/><path d="M696.4 455.2L722.8 500.9L670.0 500.9Z" fill="url(#gu)"/><path d="M696.4 455.2L749.2 455.2L722.8 500.9Z" fill="rgb(11, 15, 27)"/><path d="M696.4 455.2L749.2 455.2L722.8 500.9Z" fill="url(#gd)"/><path d="M749.2 455.2L775.6 500.9L722.8 500.9Z" fill="rgb(11, 15, 27)"/><path d="M749.2 455.2L775.6 500.9L722.8 500.9Z" fill="url(#gu)"/><path d="M749.2 455.2L802.0 455.2L775.6 500.9Z" fill="rgb(11, 15, 27)"/><path d="M749.2 455.2L802.0 455.2L775.6 500.9Z" fill="url(#gd)"/><path d="M802.0 455.2L828.4 500.9L775.6 500.9Z" fill="rgb(11, 15, 27)"/><path d="M802.0 455.2L828.4 500.9L775.6 500.9Z" fill="url(#gu)"/><path d="M802.0 455.2L854.8 455.2L828.4 500.9Z" fill="rgb(11, 15, 27)"/><path d="M802.0 455.2L854.8 455.2L828.4 500.9Z" fill="url(#gd)"/><path d="M854.8 455.2L881.2 500.9L828.4 500.9Z" fill="rgb(11, 15, 27)"/><path d="M854.8 455.2L881.2 500.9L828.4 500.9Z" fill="url(#gu)"/><path d="M854.8 455.2L907.6 455.2L881.2 500.9Z" fill="rgb(11, 15, 27)"/><path d="M854.8 455.2L907.6 455.2L881.2 500.9Z" fill="url(#gd)"/><path d="M907.6 455.2L934.0 500.9L881.2 500.9Z" fill="rgb(14, 25, 51)"/><path d="M907.6 455.2L934.0 500.9L881.2 500.9Z" fill="url(#gu)"/><path d="M907.6 455.2L960.4 455.2L934.0 500.9Z" fill="rgb(13, 23, 48)"/><path d="M907.6 455.2L960.4 455.2L934.0 500.9Z" fill="url(#gd)"/><path d="M960.4 455.2L986.8 500.9L934.0 500.9Z" fill="rgb(14, 25, 51)"/><path d="M960.4 455.2L986.8 500.9L934.0 500.9Z" fill="url(#gu)"/><path d="M960.4 455.2L1013.2 455.2L986.8 500.9Z" fill="rgb(13, 23, 48)"/><path d="M960.4 455.2L1013.2 455.2L986.8 500.9Z" fill="url(#gd)"/><path d="M1013.2 455.2L1039.6 500.9L986.8 500.9Z" fill="rgb(14, 25, 51)"/><path d="M1013.2 455.2L1039.6 500.9L986.8 500.9Z" fill="url(#gu)"/><path d="M1013.2 455.2L1066.0 455.2L1039.6 500.9Z" fill="rgb(13, 23, 48)"/><path d="M1013.2 455.2L1066.0 455.2L1039.6 500.9Z" fill="url(#gd)"/><path d="M1066.0 455.2L1092.4 500.9L1039.6 500.9Z" fill="rgb(14, 25, 51)"/><path d="M1066.0 455.2L1092.4 500.9L1039.6 500.9Z" fill="url(#gu)"/><path d="M1066.0 455.2L1118.8 455.2L1092.4 500.9Z" fill="rgb(13, 23, 48)"/><path d="M1066.0 455.2L1118.8 455.2L1092.4 500.9Z" fill="url(#gd)"/><path d="M-69.2 500.9L-42.8 546.6L-95.6 546.6Z" fill="rgb(10, 13, 21)"/><path d="M-69.2 500.9L-42.8 546.6L-95.6 546.6Z" fill="url(#gu)"/><path d="M-69.2 500.9L-16.4 500.9L-42.8 546.6Z" fill="rgb(10, 13, 21)"/><path d="M-69.2 500.9L-16.4 500.9L-42.8 546.6Z" fill="url(#gd)"/><path d="M-16.4 500.9L10.0 546.6L-42.8 546.6Z" fill="rgb(10, 13, 21)"/><path d="M-16.4 500.9L10.0 546.6L-42.8 546.6Z" fill="url(#gu)"/><path d="M-16.4 500.9L36.4 500.9L10.0 546.6Z" fill="rgb(10, 13, 21)"/><path d="M-16.4 500.9L36.4 500.9L10.0 546.6Z" fill="url(#gd)"/><path d="M36.4 500.9L62.8 546.6L10.0 546.6Z" fill="rgb(10, 13, 21)"/><path d="M36.4 500.9L62.8 546.6L10.0 546.6Z" fill="url(#gu)"/><path d="M36.4 500.9L89.2 500.9L62.8 546.6Z" fill="rgb(10, 13, 21)"/><path d="M36.4 500.9L89.2 500.9L62.8 546.6Z" fill="url(#gd)"/><path d="M89.2 500.9L115.6 546.6L62.8 546.6Z" fill="rgb(11, 15, 27)"/><path d="M89.2 500.9L115.6 546.6L62.8 546.6Z" fill="url(#gu)"/><path d="M89.2 500.9L142.0 500.9L115.6 546.6Z" fill="rgb(11, 15, 27)"/><path d="M89.2 500.9L142.0 500.9L115.6 546.6Z" fill="url(#gd)"/><path d="M142.0 500.9L168.4 546.6L115.6 546.6Z" fill="rgb(11, 15, 27)"/><path d="M142.0 500.9L168.4 546.6L115.6 546.6Z" fill="url(#gu)"/><path d="M142.0 500.9L194.8 500.9L168.4 546.6Z" fill="rgb(11, 15, 27)"/><path d="M142.0 500.9L194.8 500.9L168.4 546.6Z" fill="url(#gd)"/><path d="M194.8 500.9L221.2 546.6L168.4 546.6Z" fill="rgb(11, 15, 27)"/><path d="M194.8 500.9L221.2 546.6L168.4 546.6Z" fill="url(#gu)"/><path d="M194.8 500.9L247.6 500.9L221.2 546.6Z" fill="rgb(11, 15, 27)"/><path d="M194.8 500.9L247.6 500.9L221.2 546.6Z" fill="url(#gd)"/><path d="M247.6 500.9L274.0 546.6L221.2 546.6Z" fill="rgb(11, 15, 27)"/><path d="M247.6 500.9L274.0 546.6L221.2 546.6Z" fill="url(#gu)"/><path d="M247.6 500.9L300.4 500.9L274.0 546.6Z" fill="rgb(11, 15, 27)"/><path d="M247.6 500.9L300.4 500.9L274.0 546.6Z" fill="url(#gd)"/><path d="M300.4 500.9L326.8 546.6L274.0 546.6Z" fill="rgb(11, 15, 27)"/><path d="M300.4 500.9L326.8 546.6L274.0 546.6Z" fill="url(#gu)"/><path d="M300.4 500.9L353.2 500.9L326.8 546.6Z" fill="rgb(11, 15, 27)"/><path d="M300.4 500.9L353.2 500.9L326.8 546.6Z" fill="url(#gd)"/><path d="M353.2 500.9L379.6 546.6L326.8 546.6Z" fill="rgb(11, 15, 27)"/><path d="M353.2 500.9L379.6 546.6L326.8 546.6Z" fill="url(#gu)"/><path d="M353.2 500.9L406.0 500.9L379.6 546.6Z" fill="rgb(11, 15, 27)"/><path d="M353.2 500.9L406.0 500.9L379.6 546.6Z" fill="url(#gd)"/><path d="M406.0 500.9L432.4 546.6L379.6 546.6Z" fill="rgb(11, 15, 27)"/><path d="M406.0 500.9L432.4 546.6L379.6 546.6Z" fill="url(#gu)"/><path d="M406.0 500.9L458.8 500.9L432.4 546.6Z" fill="rgb(11, 15, 27)"/><path d="M406.0 500.9L458.8 500.9L432.4 546.6Z" fill="url(#gd)"/><path d="M458.8 500.9L485.2 546.6L432.4 546.6Z" fill="rgb(11, 15, 27)"/><path d="M458.8 500.9L485.2 546.6L432.4 546.6Z" fill="url(#gu)"/><path d="M458.8 500.9L511.6 500.9L485.2 546.6Z" fill="rgb(11, 15, 27)"/><path d="M458.8 500.9L511.6 500.9L485.2 546.6Z" fill="url(#gd)"/><path d="M511.6 500.9L538.0 546.6L485.2 546.6Z" fill="rgb(11, 15, 27)"/><path d="M511.6 500.9L538.0 546.6L485.2 546.6Z" fill="url(#gu)"/><path d="M511.6 500.9L564.4 500.9L538.0 546.6Z" fill="rgb(11, 15, 27)"/><path d="M511.6 500.9L564.4 500.9L538.0 546.6Z" fill="url(#gd)"/><path d="M564.4 500.9L590.8 546.6L538.0 546.6Z" fill="rgb(11, 15, 27)"/><path d="M564.4 500.9L590.8 546.6L538.0 546.6Z" fill="url(#gu)"/><path d="M564.4 500.9L617.2 500.9L590.8 546.6Z" fill="rgb(11, 15, 27)"/><path d="M564.4 500.9L617.2 500.9L590.8 546.6Z" fill="url(#gd)"/><path d="M617.2 500.9L643.6 546.6L590.8 546.6Z" fill="rgb(11, 15, 27)"/><path d="M617.2 500.9L643.6 546.6L590.8 546.6Z" fill="url(#gu)"/><path d="M617.2 500.9L670.0 500.9L643.6 546.6Z" fill="rgb(11, 15, 27)"/><path d="M617.2 500.9L670.0 500.9L643.6 546.6Z" fill="url(#gd)"/><path d="M670.0 500.9L696.4 546.6L643.6 546.6Z" fill="rgb(11, 15, 27)"/><path d="M670.0 500.9L696.4 546.6L643.6 546.6Z" fill="url(#gu)"/><path d="M670.0 500.9L722.8 500.9L696.4 546.6Z" fill="rgb(11, 15, 27)"/><path d="M670.0 500.9L722.8 500.9L696.4 546.6Z" fill="url(#gd)"/><path d="M722.8 500.9L749.2 546.6L696.4 546.6Z" fill="rgb(11, 15, 27)"/><path d="M722.8 500.9L749.2 546.6L696.4 546.6Z" fill="url(#gu)"/><path d="M722.8 500.9L775.6 500.9L749.2 546.6Z" fill="rgb(11, 15, 27)"/><path d="M722.8 500.9L775.6 500.9L749.2 546.6Z" fill="url(#gd)"/><path d="M775.6 500.9L802.0 546.6L749.2 546.6Z" fill="rgb(11, 15, 27)"/><path d="M775.6 500.9L802.0 546.6L749.2 546.6Z" fill="url(#gu)"/><path d="M775.6 500.9L828.4 500.9L802.0 546.6Z" fill="rgb(11, 15, 27)"/><path d="M775.6 500.9L828.4 500.9L802.0 546.6Z" fill="url(#gd)"/><path d="M828.4 500.9L854.8 546.6L802.0 546.6Z" fill="rgb(11, 15, 27)"/><path d="M828.4 500.9L854.8 546.6L802.0 546.6Z" fill="url(#gu)"/><path d="M828.4 500.9L881.2 500.9L854.8 546.6Z" fill="rgb(11, 15, 27)"/><path d="M828.4 500.9L881.2 500.9L854.8 546.6Z" fill="url(#gd)"/><path d="M881.2 500.9L907.6 546.6L854.8 546.6Z" fill="rgb(11, 15, 27)"/><path d="M881.2 500.9L907.6 546.6L854.8 546.6Z" fill="url(#gu)"/><path d="M881.2 500.9L934.0 500.9L907.6 546.6Z" fill="rgb(15, 29, 62)"/><path d="M881.2 500.9L934.0 500.9L907.6 546.6Z" fill="url(#gd)"/><path d="M934.0 500.9L960.4 546.6L907.6 546.6Z" fill="rgb(16, 31, 66)"/><path d="M934.0 500.9L960.4 546.6L907.6 546.6Z" fill="url(#gu)"/><path d="M934.0 500.9L986.8 500.9L960.4 546.6Z" fill="rgb(15, 29, 62)"/><path d="M934.0 500.9L986.8 500.9L960.4 546.6Z" fill="url(#gd)"/><path d="M986.8 500.9L1013.2 546.6L960.4 546.6Z" fill="rgb(16, 31, 66)"/><path d="M986.8 500.9L1013.2 546.6L960.4 546.6Z" fill="url(#gu)"/><path d="M986.8 500.9L1039.6 500.9L1013.2 546.6Z" fill="rgb(15, 29, 62)"/><path d="M986.8 500.9L1039.6 500.9L1013.2 546.6Z" fill="url(#gd)"/><path d="M1039.6 500.9L1066.0 546.6L1013.2 546.6Z" fill="rgb(16, 31, 66)"/><path d="M1039.6 500.9L1066.0 546.6L1013.2 546.6Z" fill="url(#gu)"/><path d="M1039.6 500.9L1092.4 500.9L1066.0 546.6Z" fill="rgb(15, 29, 62)"/><path d="M1039.6 500.9L1092.4 500.9L1066.0 546.6Z" fill="url(#gd)"/><path d="M1092.4 500.9L1118.8 546.6L1066.0 546.6Z" fill="rgb(16, 31, 66)"/><path d="M1092.4 500.9L1118.8 546.6L1066.0 546.6Z" fill="url(#gu)"/><path d="M1092.4 500.9L1145.2 500.9L1118.8 546.6Z" fill="rgb(15, 29, 62)"/><path d="M1092.4 500.9L1145.2 500.9L1118.8 546.6Z" fill="url(#gd)"/><path d="M-95.6 546.6L-69.2 592.3L-122.0 592.3Z" fill="rgb(10, 13, 21)"/><path d="M-95.6 546.6L-69.2 592.3L-122.0 592.3Z" fill="url(#gu)"/><path d="M-95.6 546.6L-42.8 546.6L-69.2 592.3Z" fill="rgb(10, 13, 21)"/><path d="M-95.6 546.6L-42.8 546.6L-69.2 592.3Z" fill="url(#gd)"/><path d="M-42.8 546.6L-16.4 592.3L-69.2 592.3Z" fill="rgb(10, 13, 21)"/><path d="M-42.8 546.6L-16.4 592.3L-69.2 592.3Z" fill="url(#gu)"/><path d="M-42.8 546.6L10.0 546.6L-16.4 592.3Z" fill="rgb(10, 13, 21)"/><path d="M-42.8 546.6L10.0 546.6L-16.4 592.3Z" fill="url(#gd)"/><path d="M10.0 546.6L36.4 592.3L-16.4 592.3Z" fill="rgb(10, 13, 21)"/><path d="M10.0 546.6L36.4 592.3L-16.4 592.3Z" fill="url(#gu)"/><path d="M10.0 546.6L62.8 546.6L36.4 592.3Z" fill="rgb(10, 13, 21)"/><path d="M10.0 546.6L62.8 546.6L36.4 592.3Z" fill="url(#gd)"/><path d="M62.8 546.6L89.2 592.3L36.4 592.3Z" fill="rgb(10, 13, 21)"/><path d="M62.8 546.6L89.2 592.3L36.4 592.3Z" fill="url(#gu)"/><path d="M62.8 546.6L115.6 546.6L89.2 592.3Z" fill="rgb(11, 15, 27)"/><path d="M62.8 546.6L115.6 546.6L89.2 592.3Z" fill="url(#gd)"/><path d="M115.6 546.6L142.0 592.3L89.2 592.3Z" fill="rgb(11, 15, 27)"/><path d="M115.6 546.6L142.0 592.3L89.2 592.3Z" fill="url(#gu)"/><path d="M115.6 546.6L168.4 546.6L142.0 592.3Z" fill="rgb(11, 15, 27)"/><path d="M115.6 546.6L168.4 546.6L142.0 592.3Z" fill="url(#gd)"/><path d="M168.4 546.6L194.8 592.3L142.0 592.3Z" fill="rgb(11, 15, 27)"/><path d="M168.4 546.6L194.8 592.3L142.0 592.3Z" fill="url(#gu)"/><path d="M168.4 546.6L221.2 546.6L194.8 592.3Z" fill="rgb(11, 15, 27)"/><path d="M168.4 546.6L221.2 546.6L194.8 592.3Z" fill="url(#gd)"/><path d="M221.2 546.6L247.6 592.3L194.8 592.3Z" fill="rgb(11, 15, 27)"/><path d="M221.2 546.6L247.6 592.3L194.8 592.3Z" fill="url(#gu)"/><path d="M221.2 546.6L274.0 546.6L247.6 592.3Z" fill="rgb(11, 15, 27)"/><path d="M221.2 546.6L274.0 546.6L247.6 592.3Z" fill="url(#gd)"/><path d="M274.0 546.6L300.4 592.3L247.6 592.3Z" fill="rgb(11, 15, 27)"/><path d="M274.0 546.6L300.4 592.3L247.6 592.3Z" fill="url(#gu)"/><path d="M274.0 546.6L326.8 546.6L300.4 592.3Z" fill="rgb(11, 15, 27)"/><path d="M274.0 546.6L326.8 546.6L300.4 592.3Z" fill="url(#gd)"/><path d="M326.8 546.6L353.2 592.3L300.4 592.3Z" fill="rgb(11, 15, 27)"/><path d="M326.8 546.6L353.2 592.3L300.4 592.3Z" fill="url(#gu)"/><path d="M326.8 546.6L379.6 546.6L353.2 592.3Z" fill="rgb(11, 15, 27)"/><path d="M326.8 546.6L379.6 546.6L353.2 592.3Z" fill="url(#gd)"/><path d="M379.6 546.6L406.0 592.3L353.2 592.3Z" fill="rgb(11, 15, 27)"/><path d="M379.6 546.6L406.0 592.3L353.2 592.3Z" fill="url(#gu)"/><path d="M379.6 546.6L432.4 546.6L406.0 592.3Z" fill="rgb(11, 15, 27)"/><path d="M379.6 546.6L432.4 546.6L406.0 592.3Z" fill="url(#gd)"/><path d="M432.4 546.6L458.8 592.3L406.0 592.3Z" fill="rgb(11, 15, 27)"/><path d="M432.4 546.6L458.8 592.3L406.0 592.3Z" fill="url(#gu)"/><path d="M432.4 546.6L485.2 546.6L458.8 592.3Z" fill="rgb(11, 15, 27)"/><path d="M432.4 546.6L485.2 546.6L458.8 592.3Z" fill="url(#gd)"/><path d="M485.2 546.6L511.6 592.3L458.8 592.3Z" fill="rgb(11, 15, 27)"/><path d="M485.2 546.6L511.6 592.3L458.8 592.3Z" fill="url(#gu)"/><path d="M485.2 546.6L538.0 546.6L511.6 592.3Z" fill="rgb(11, 15, 27)"/><path d="M485.2 546.6L538.0 546.6L511.6 592.3Z" fill="url(#gd)"/><path d="M538.0 546.6L564.4 592.3L511.6 592.3Z" fill="rgb(11, 15, 27)"/><path d="M538.0 546.6L564.4 592.3L511.6 592.3Z" fill="url(#gu)"/><path d="M538.0 546.6L590.8 546.6L564.4 592.3Z" fill="rgb(11, 15, 27)"/><path d="M538.0 546.6L590.8 546.6L564.4 592.3Z" fill="url(#gd)"/><path d="M590.8 546.6L617.2 592.3L564.4 592.3Z" fill="rgb(11, 15, 27)"/><path d="M590.8 546.6L617.2 592.3L564.4 592.3Z" fill="url(#gu)"/><path d="M590.8 546.6L643.6 546.6L617.2 592.3Z" fill="rgb(11, 15, 27)"/><path d="M590.8 546.6L643.6 546.6L617.2 592.3Z" fill="url(#gd)"/><path d="M643.6 546.6L670.0 592.3L617.2 592.3Z" fill="rgb(11, 15, 27)"/><path d="M643.6 546.6L670.0 592.3L617.2 592.3Z" fill="url(#gu)"/><path d="M643.6 546.6L696.4 546.6L670.0 592.3Z" fill="rgb(11, 15, 27)"/><path d="M643.6 546.6L696.4 546.6L670.0 592.3Z" fill="url(#gd)"/><path d="M696.4 546.6L722.8 592.3L670.0 592.3Z" fill="rgb(11, 15, 27)"/><path d="M696.4 546.6L722.8 592.3L670.0 592.3Z" fill="url(#gu)"/><path d="M696.4 546.6L749.2 546.6L722.8 592.3Z" fill="rgb(11, 15, 27)"/><path d="M696.4 546.6L749.2 546.6L722.8 592.3Z" fill="url(#gd)"/><path d="M749.2 546.6L775.6 592.3L722.8 592.3Z" fill="rgb(11, 15, 27)"/><path d="M749.2 546.6L775.6 592.3L722.8 592.3Z" fill="url(#gu)"/><path d="M749.2 546.6L802.0 546.6L775.6 592.3Z" fill="rgb(11, 15, 27)"/><path d="M749.2 546.6L802.0 546.6L775.6 592.3Z" fill="url(#gd)"/><path d="M802.0 546.6L828.4 592.3L775.6 592.3Z" fill="rgb(11, 15, 27)"/><path d="M802.0 546.6L828.4 592.3L775.6 592.3Z" fill="url(#gu)"/><path d="M802.0 546.6L854.8 546.6L828.4 592.3Z" fill="rgb(11, 15, 27)"/><path d="M802.0 546.6L854.8 546.6L828.4 592.3Z" fill="url(#gd)"/><path d="M854.8 546.6L881.2 592.3L828.4 592.3Z" fill="rgb(11, 15, 27)"/><path d="M854.8 546.6L881.2 592.3L828.4 592.3Z" fill="url(#gu)"/><path d="M854.8 546.6L907.6 546.6L881.2 592.3Z" fill="rgb(11, 15, 27)"/><path d="M854.8 546.6L907.6 546.6L881.2 592.3Z" fill="url(#gd)"/><path d="M907.6 546.6L934.0 592.3L881.2 592.3Z" fill="rgb(16, 31, 66)"/><path d="M907.6 546.6L934.0 592.3L881.2 592.3Z" fill="url(#gu)"/><path d="M907.6 546.6L960.4 546.6L934.0 592.3Z" fill="rgb(16, 31, 66)"/><path d="M907.6 546.6L960.4 546.6L934.0 592.3Z" fill="url(#gd)"/><path d="M960.4 546.6L986.8 592.3L934.0 592.3Z" fill="rgb(16, 31, 66)"/><path d="M960.4 546.6L986.8 592.3L934.0 592.3Z" fill="url(#gu)"/><path d="M960.4 546.6L1013.2 546.6L986.8 592.3Z" fill="rgb(16, 31, 66)"/><path d="M960.4 546.6L1013.2 546.6L986.8 592.3Z" fill="url(#gd)"/><path d="M1013.2 546.6L1039.6 592.3L986.8 592.3Z" fill="rgb(16, 31, 66)"/><path d="M1013.2 546.6L1039.6 592.3L986.8 592.3Z" fill="url(#gu)"/><path d="M1013.2 546.6L1066.0 546.6L1039.6 592.3Z" fill="rgb(16, 31, 66)"/><path d="M1013.2 546.6L1066.0 546.6L1039.6 592.3Z" fill="url(#gd)"/><path d="M1066.0 546.6L1092.4 592.3L1039.6 592.3Z" fill="rgb(16, 31, 66)"/><path d="M1066.0 546.6L1092.4 592.3L1039.6 592.3Z" fill="url(#gu)"/><path d="M1066.0 546.6L1118.8 546.6L1092.4 592.3Z" fill="rgb(16, 31, 66)"/><path d="M1066.0 546.6L1118.8 546.6L1092.4 592.3Z" fill="url(#gd)"/><path d="M-95.6 -1.8L-69.2 43.9M-42.8 -1.8L-16.4 43.9M10.0 -1.8L36.4 43.9M62.8 -1.8L89.2 43.9M115.6 -1.8L142.0 43.9M168.4 -1.8L194.8 43.9M221.2 -1.8L247.6 43.9M274.0 -1.8L300.4 43.9M326.8 -1.8L353.2 43.9M379.6 -1.8L406.0 43.9M432.4 -1.8L458.8 43.9M485.2 -1.8L511.6 43.9M538.0 -1.8L564.4 43.9M590.8 -1.8L617.2 43.9M643.6 -1.8L670.0 43.9M696.4 -1.8L722.8 43.9M749.2 -1.8L775.6 43.9M802.0 -1.8L828.4 43.9M854.8 -1.8L881.2 43.9M907.6 -1.8L934.0 43.9M960.4 -1.8L986.8 43.9M1013.2 -1.8L1039.6 43.9M1066.0 -1.8L1092.4 43.9M-69.2 43.9L-42.8 89.6M-16.4 43.9L10.0 89.6M36.4 43.9L62.8 89.6M89.2 43.9L115.6 89.6M142.0 43.9L168.4 89.6M194.8 43.9L221.2 89.6M247.6 43.9L274.0 89.6M300.4 43.9L326.8 89.6M353.2 43.9L379.6 89.6M406.0 43.9L432.4 89.6M458.8 43.9L485.2 89.6M511.6 43.9L538.0 89.6M564.4 43.9L590.8 89.6M617.2 43.9L643.6 89.6M670.0 43.9L696.4 89.6M722.8 43.9L749.2 89.6M775.6 43.9L802.0 89.6M828.4 43.9L854.8 89.6M881.2 43.9L907.6 89.6M934.0 43.9L960.4 89.6M986.8 43.9L1013.2 89.6M1039.6 43.9L1066.0 89.6M1092.4 43.9L1118.8 89.6M-95.6 89.6L-69.2 135.3M-42.8 89.6L-16.4 135.3M10.0 89.6L36.4 135.3M62.8 89.6L89.2 135.3M115.6 89.6L142.0 135.3M168.4 89.6L194.8 135.3M221.2 89.6L247.6 135.3M274.0 89.6L300.4 135.3M326.8 89.6L353.2 135.3M379.6 89.6L406.0 135.3M432.4 89.6L458.8 135.3M485.2 89.6L511.6 135.3M538.0 89.6L564.4 135.3M590.8 89.6L617.2 135.3M643.6 89.6L670.0 135.3M696.4 89.6L722.8 135.3M749.2 89.6L775.6 135.3M802.0 89.6L828.4 135.3M854.8 89.6L881.2 135.3M907.6 89.6L934.0 135.3M960.4 89.6L986.8 135.3M1013.2 89.6L1039.6 135.3M1066.0 89.6L1092.4 135.3M-69.2 135.3L-42.8 181.0M-16.4 135.3L10.0 181.0M36.4 135.3L62.8 181.0M89.2 135.3L115.6 181.0M142.0 135.3L168.4 181.0M194.8 135.3L221.2 181.0M247.6 135.3L274.0 181.0M300.4 135.3L326.8 181.0M353.2 135.3L379.6 181.0M406.0 135.3L432.4 181.0M458.8 135.3L485.2 181.0M511.6 135.3L538.0 181.0M564.4 135.3L590.8 181.0M617.2 135.3L643.6 181.0M670.0 135.3L696.4 181.0M722.8 135.3L749.2 181.0M775.6 135.3L802.0 181.0M828.4 135.3L854.8 181.0M881.2 135.3L907.6 181.0M934.0 135.3L960.4 181.0M986.8 135.3L1013.2 181.0M1039.6 135.3L1066.0 181.0M1092.4 135.3L1118.8 181.0M-95.6 181.0L-69.2 226.7M-42.8 181.0L-16.4 226.7M10.0 181.0L36.4 226.7M62.8 181.0L89.2 226.7M115.6 181.0L142.0 226.7M168.4 181.0L194.8 226.7M221.2 181.0L247.6 226.7M274.0 181.0L300.4 226.7M326.8 181.0L353.2 226.7M379.6 181.0L406.0 226.7M432.4 181.0L458.8 226.7M485.2 181.0L511.6 226.7M538.0 181.0L564.4 226.7M590.8 181.0L617.2 226.7M643.6 181.0L670.0 226.7M696.4 181.0L722.8 226.7M749.2 181.0L775.6 226.7M802.0 181.0L828.4 226.7M854.8 181.0L881.2 226.7M907.6 181.0L934.0 226.7M960.4 181.0L986.8 226.7M1013.2 181.0L1039.6 226.7M1066.0 181.0L1092.4 226.7M-69.2 226.7L-42.8 272.4M-16.4 226.7L10.0 272.4M36.4 226.7L62.8 272.4M89.2 226.7L115.6 272.4M142.0 226.7L168.4 272.4M194.8 226.7L221.2 272.4M247.6 226.7L274.0 272.4M300.4 226.7L326.8 272.4M353.2 226.7L379.6 272.4M406.0 226.7L432.4 272.4M458.8 226.7L485.2 272.4M511.6 226.7L538.0 272.4M564.4 226.7L590.8 272.4M617.2 226.7L643.6 272.4M670.0 226.7L696.4 272.4M722.8 226.7L749.2 272.4M775.6 226.7L802.0 272.4M828.4 226.7L854.8 272.4M881.2 226.7L907.6 272.4M934.0 226.7L960.4 272.4M986.8 226.7L1013.2 272.4M1039.6 226.7L1066.0 272.4M1092.4 226.7L1118.8 272.4M-95.6 272.4L-69.2 318.1M-42.8 272.4L-16.4 318.1M10.0 272.4L36.4 318.1M62.8 272.4L89.2 318.1M115.6 272.4L142.0 318.1M168.4 272.4L194.8 318.1M221.2 272.4L247.6 318.1M274.0 272.4L300.4 318.1M326.8 272.4L353.2 318.1M379.6 272.4L406.0 318.1M432.4 272.4L458.8 318.1M485.2 272.4L511.6 318.1M538.0 272.4L564.4 318.1M590.8 272.4L617.2 318.1M643.6 272.4L670.0 318.1M696.4 272.4L722.8 318.1M749.2 272.4L775.6 318.1M802.0 272.4L828.4 318.1M854.8 272.4L881.2 318.1M907.6 272.4L934.0 318.1M960.4 272.4L986.8 318.1M1013.2 272.4L1039.6 318.1M1066.0 272.4L1092.4 318.1M-69.2 318.1L-42.8 363.8M-16.4 318.1L10.0 363.8M36.4 318.1L62.8 363.8M89.2 318.1L115.6 363.8M142.0 318.1L168.4 363.8M194.8 318.1L221.2 363.8M247.6 318.1L274.0 363.8M300.4 318.1L326.8 363.8M353.2 318.1L379.6 363.8M406.0 318.1L432.4 363.8M458.8 318.1L485.2 363.8M511.6 318.1L538.0 363.8M564.4 318.1L590.8 363.8M617.2 318.1L643.6 363.8M670.0 318.1L696.4 363.8M722.8 318.1L749.2 363.8M775.6 318.1L802.0 363.8M828.4 318.1L854.8 363.8M881.2 318.1L907.6 363.8M934.0 318.1L960.4 363.8M986.8 318.1L1013.2 363.8M1039.6 318.1L1066.0 363.8M1092.4 318.1L1118.8 363.8M-95.6 363.8L-69.2 409.5M-42.8 363.8L-16.4 409.5M10.0 363.8L36.4 409.5M62.8 363.8L89.2 409.5M115.6 363.8L142.0 409.5M168.4 363.8L194.8 409.5M221.2 363.8L247.6 409.5M274.0 363.8L300.4 409.5M326.8 363.8L353.2 409.5M379.6 363.8L406.0 409.5M432.4 363.8L458.8 409.5M485.2 363.8L511.6 409.5M538.0 363.8L564.4 409.5M590.8 363.8L617.2 409.5M643.6 363.8L670.0 409.5M696.4 363.8L722.8 409.5M749.2 363.8L775.6 409.5M802.0 363.8L828.4 409.5M854.8 363.8L881.2 409.5M907.6 363.8L934.0 409.5M960.4 363.8L986.8 409.5M1013.2 363.8L1039.6 409.5M1066.0 363.8L1092.4 409.5M-69.2 409.5L-42.8 455.2M-16.4 409.5L10.0 455.2M36.4 409.5L62.8 455.2M89.2 409.5L115.6 455.2M142.0 409.5L168.4 455.2M194.8 409.5L221.2 455.2M247.6 409.5L274.0 455.2M300.4 409.5L326.8 455.2M353.2 409.5L379.6 455.2M406.0 409.5L432.4 455.2M458.8 409.5L485.2 455.2M511.6 409.5L538.0 455.2M564.4 409.5L590.8 455.2M617.2 409.5L643.6 455.2M670.0 409.5L696.4 455.2M722.8 409.5L749.2 455.2M775.6 409.5L802.0 455.2M828.4 409.5L854.8 455.2M881.2 409.5L907.6 455.2M934.0 409.5L960.4 455.2M986.8 409.5L1013.2 455.2M1039.6 409.5L1066.0 455.2M1092.4 409.5L1118.8 455.2M-95.6 455.2L-69.2 500.9M-42.8 455.2L-16.4 500.9M10.0 455.2L36.4 500.9M62.8 455.2L89.2 500.9M115.6 455.2L142.0 500.9M168.4 455.2L194.8 500.9M221.2 455.2L247.6 500.9M274.0 455.2L300.4 500.9M326.8 455.2L353.2 500.9M379.6 455.2L406.0 500.9M432.4 455.2L458.8 500.9M485.2 455.2L511.6 500.9M538.0 455.2L564.4 500.9M590.8 455.2L617.2 500.9M643.6 455.2L670.0 500.9M696.4 455.2L722.8 500.9M749.2 455.2L775.6 500.9M802.0 455.2L828.4 500.9M854.8 455.2L881.2 500.9M907.6 455.2L934.0 500.9M960.4 455.2L986.8 500.9M1013.2 455.2L1039.6 500.9M1066.0 455.2L1092.4 500.9M-69.2 500.9L-42.8 546.6M-16.4 500.9L10.0 546.6M36.4 500.9L62.8 546.6M89.2 500.9L115.6 546.6M142.0 500.9L168.4 546.6M194.8 500.9L221.2 546.6M247.6 500.9L274.0 546.6M300.4 500.9L326.8 546.6M353.2 500.9L379.6 546.6M406.0 500.9L432.4 546.6M458.8 500.9L485.2 546.6M511.6 500.9L538.0 546.6M564.4 500.9L590.8 546.6M617.2 500.9L643.6 546.6M670.0 500.9L696.4 546.6M722.8 500.9L749.2 546.6M775.6 500.9L802.0 546.6M828.4 500.9L854.8 546.6M881.2 500.9L907.6 546.6M934.0 500.9L960.4 546.6M986.8 500.9L1013.2 546.6M1039.6 500.9L1066.0 546.6M1092.4 500.9L1118.8 546.6M-95.6 546.6L-69.2 592.3M-42.8 546.6L-16.4 592.3M10.0 546.6L36.4 592.3M62.8 546.6L89.2 592.3M115.6 546.6L142.0 592.3M168.4 546.6L194.8 592.3M221.2 546.6L247.6 592.3M274.0 546.6L300.4 592.3M326.8 546.6L353.2 592.3M379.6 546.6L406.0 592.3M432.4 546.6L458.8 592.3M485.2 546.6L511.6 592.3M538.0 546.6L564.4 592.3M590.8 546.6L617.2 592.3M643.6 546.6L670.0 592.3M696.4 546.6L722.8 592.3M749.2 546.6L775.6 592.3M802.0 546.6L828.4 592.3M854.8 546.6L881.2 592.3M907.6 546.6L934.0 592.3M960.4 546.6L986.8 592.3M1013.2 546.6L1039.6 592.3M1066.0 546.6L1092.4 592.3" stroke="#000" stroke-opacity="0.45" stroke-width="1.1" fill="none"/><rect x="0" y="0" width="970" height="1" fill="#4a5268" opacity="0.7"/></svg>
<div id="win"></div>
<div id="side"></div>
<div class="abs" style="left:62.3px;top:41.4px;width:14.5px;height:14.6px;background:#fff;border-radius:2.5px"></div>
<svg style="position:absolute;left:64.2px;top:42.6px;" width="10.8" height="10.8" viewBox="0 0 24 24"><path fill="#0f203d" d="M12 12.75c1.63 0 3.07.39 4.24.9 1.08.48 1.76 1.560 1.76 2.73V18H6v-1.61c0-1.18.68-2.26 1.76-2.73 1.17-.52 2.61-.91 4.240-.91zM4 13c1.1 0 2-.9 2-2s-.9-2-2-2-2 .9-2 2 .9 2 2 2zm1.13 1.1c-.37-.06-.74-.1-1.13-.1-.99 0-1.93.21-2.78.58C.48 14.9 0 15.62 0 16.43V18h4.5v-1.61c0-.83.23-1.61.63-2.29zM20 13c1.1 0 2-.9 2-2s-.9-2-2-2-2 .9-2 2 .9 2 2 2zm4 3.43c0-.81-.48-1.53-1.22-1.85-.85-.37-1.79-.58-2.78-.58-.39 0-.76.04-1.130.1.4.68.63 1.46.63 2.29V18H24v-1.57zM12 6c1.66 0 3 1.34 3 3s-1.34 3-3 3-3-1.34-3-3 1.34-3 3-3z"/></svg>
<div class="t" style="left:80.5px;top:44.26px;font-size:8.3px;color:#fff;-webkit-text-stroke:0.2px #fff;transform:scaleX(0.85);transform-origin:0 0;">LOC</div>
<svg style="position:absolute;left:65.7px;top:70.9px;" width="9.3" height="9.3" viewBox="0 0 24 24"><path fill="#fff" d="M12 12.75c1.63 0 3.07.39 4.24.9 1.08.48 1.76 1.560 1.76 2.73V18H6v-1.61c0-1.18.68-2.26 1.76-2.73 1.17-.52 2.61-.91 4.240-.91zM4 13c1.1 0 2-.9 2-2s-.9-2-2-2-2 .9-2 2 .9 2 2 2zm1.13 1.1c-.37-.06-.74-.1-1.13-.1-.99 0-1.93.21-2.78.58C.48 14.9 0 15.62 0 16.43V18h4.5v-1.61c0-.83.23-1.61.63-2.29zM20 13c1.1 0 2-.9 2-2s-.9-2-2-2-2 .9-2 2 .9 2 2 2zm4 3.43c0-.81-.48-1.53-1.22-1.85-.85-.37-1.79-.58-2.78-.58-.39 0-.76.04-1.130.1.4.68.63 1.46.63 2.29V18H24v-1.57zM12 6c1.66 0 3 1.34 3 3s-1.34 3-3 3-3-1.34-3-3 1.34-3 3-3z"/></svg>
<div class="t" style="left:91px;top:71.91px;font-size:6.4px;color:#d5dbe6;letter-spacing:-0.02px;">Customers</div>
<div class="abs" style="left:59px;top:83px;width:107px;height:17.2px;background:#173c74;border-radius:2px"></div>
<svg style="position:absolute;left:66.2px;top:87.8px;" width="8.3" height="8.3" viewBox="0 0 24 24"><path fill="#fff" d="M19.14 12.94c.04-.3.06-.61.06-.94 0-.32-.02-.64-.07-.94l2.03-1.58c.18-.14.23-.41.12-.61l-1.92-3.32c-.12-.22-.37-.29-.59-.22l-2.39.96c-.5-.38-1.03-.7-1.62-.94l-.36-2.54c-.04-.24-.24-.41-.48-.41h-3.84c-.24 0-.43.17-.47.41l-.36 2.54c-.59.24-1.130.57-1.62.94l-2.39-.96c-.22-.08-.47 0-.59.22L2.74 8.87c-.12.21-.08.47.12.61l2.03 1.58c-.05.3-.09.63-.09.94s.02.64.07.94l-2.03 1.58c-.18.14-.23.41-.12.61l1.92 3.32c.12.22.37.29.59.22l2.39-.96c.5.38 1.03.7 1.62.94l.36 2.54c.05.24.24.41.48.41h3.84c.24 0 .44-.17.47-.41l.36-2.54c.59-.24 1.13-.56 1.62-.94l2.39.96c.22.08.47 0 .59-.22l1.92-3.32c.12-.22.07-.47-.12-.61l-2.01-1.58zM12 15.6c-1.98 0-3.6-1.62-3.6-3.6s1.62-3.6 3.6-3.6 3.6 1.62 3.6 3.6-1.62 3.6-3.6 3.6z"/></svg>
<div class="t" style="left:91px;top:88.73px;font-size:6.6px;color:#d5dbe6;">Lobby configuration</div>
<div id="top"></div>
<svg style="position:absolute;left:182px;top:45.6px" width="9" height="6.5" viewBox="0 0 9 6.5"><rect x="0" y="0" width="8.8" height="1.25" fill="#4e5461"/><rect x="0" y="2.6" width="8.8" height="1.25" fill="#4e5461"/><rect x="0" y="5.15" width="8.8" height="1.25" fill="#4e5461"/></svg>
<div class="t" style="left:204.7px;top:43.76px;font-size:8.85px;color:#56595f;font-weight:bold;">Lobby configuration</div>
<svg style="position:absolute;left:875.2px;top:42.9px" width="11.2" height="11.2" viewBox="0 0 24 24"><circle cx="12" cy="12" r="10" fill="#0f203d"/><rect x="11" y="10.5" width="2.2" height="6.5" fill="#9fb0cc"/><rect x="11" y="7" width="2.2" height="2.2" fill="#9fb0cc"/></svg>
<svg style="position:absolute;left:896.8px;top:42.9px" width="11.2" height="11.2" viewBox="0 0 24 24"><defs><clipPath id="cc"><circle cx="12" cy="12" r="7.6"/></clipPath></defs><circle cx="12" cy="12" r="10" fill="#0f203d"/><circle cx="12" cy="9" r="3.2" fill="#fff"/><ellipse cx="12" cy="19.5" rx="7" ry="4.8" fill="#fff" clip-path="url(#cc)"/></svg>
<svg style="position:absolute;left:227.5px;top:85.5px" width="10.5" height="10.5" viewBox="0 0 24 24"><path fill="#777c85" stroke="#777c85" stroke-width="0.9" d="M15.5 14h-.79l-.28-.27C15.410 12.59 16 11.11 16 9.5 16 5.91 13.09 3 9.5 3S3 5.91 3 9.5 5.91 16 9.5 16c1.61 0 3.09-.59 4.23-1.57l.27.28v.79l5 4.99L20.49 19l-4.99-5zm-6 0C7.01 14 5 11.99 5 9.5S7.01 5 9.5 5 14 7.01 14 9.5 11.99 14 9.5 14z"/></svg>
<div class="t" style="left:242.5px;top:88.15px;font-size:6.9px;color:#9ea2a9;-webkit-text-stroke:0.2px #9ea2a9;">Search ...</div>
<div class="abs" style="left:227.6px;top:99.1px;width:45.5px;height:1.1px;background:#c3c8d1"></div>
<div class="abs" style="left:818px;top:85px;width:43px;height:16.2px;background:#2350a0;border-radius:2px;box-shadow:0 1px 2px rgba(0,0,0,0.2)"></div>
<div class="t" style="left:825.2px;top:89.32px;font-size:6.5px;color:#fff;font-weight:bold;transform:scaleX(0.925);transform-origin:0 0;">ADD NEW</div>
<div id="card"></div>
<svg style="position:absolute;left:245.4px;top:130.8px" width="6.6" height="5" viewBox="0 0 6.6 5"><path d="M0 0H6.6L4 3V5H2.6V3Z" fill="#6f8fd0"/></svg>
<div class="t" style="left:256.1px;top:129.81px;font-size:6.4px;color:#4e72bf;font-weight:bold;transform:scaleX(0.88);transform-origin:0 0;">FILTERS</div>
<svg style="position:absolute;left:286.9px;top:131.6px" width="6.5" height="4.2" viewBox="0 0 6.5 4.2"><rect x="0" y="0" width="2" height="4.2" fill="#2f4f9f"/><rect x="2.25" y="0" width="2" height="4.2" fill="#2f4f9f"/><rect x="4.5" y="0" width="2" height="4.2" fill="#2f4f9f"/></svg>
<div class="t" style="left:297.9px;top:129.81px;font-size:6.4px;color:#4e72bf;font-weight:bold;transform:scaleX(0.905);transform-origin:0 0;">SHOW/HIDE COLUMNS</div>
<div id="clip">
<div class="t" style="left:245px;top:149.77px;font-size:6.45px;color:#363636;-webkit-text-stroke:0.25px #363636;">Status</div>
<div class="t" style="left:303.3px;top:149.77px;font-size:6.45px;color:#363636;-webkit-text-stroke:0.25px #363636;">Action</div>
<div class="t" style="left:361.9px;top:149.77px;font-size:6.45px;color:#363636;-webkit-text-stroke:0.25px #363636;">In Game Icon</div>
<div class="t" style="left:420.2px;top:149.77px;font-size:6.45px;color:#363636;-webkit-text-stroke:0.25px #363636;">ProductID / Lobby Brand Name</div>
<div class="t" style="left:600.4px;top:149.77px;font-size:6.45px;color:#363636;-webkit-text-stroke:0.25px #363636;">User / Last update</div>
<div class="t" style="left:694.9px;top:149.77px;font-size:6.45px;color:#363636;-webkit-text-stroke:0.25px #363636;letter-spacing:-0.35px;">RGS Type</div>
<div class="t" style="left:748.8px;top:149.77px;font-size:6.45px;color:#363636;-webkit-text-stroke:0.25px #363636;">Games</div>
<div class="t" style="left:829.7px;top:149.77px;font-size:6.45px;color:#363636;-webkit-text-stroke:0.25px #363636;">Lobby</div>
<div class="div" style="top:164.9px"></div>
<div class="bd" style="left:244.6px;top:173.08px;width:35.8px;height:10.6px;line-height:11.90px;background:#2a7b2f;color:#fff;font-size:6.3px;letter-spacing:-0.2px;border-radius:5.3px">Published</div><div class="bd" style="left:303.3px;top:173.08px;width:49.5px;height:10.6px;line-height:11.90px;background:#f7980f;color:#fff;font-size:6.3px;letter-spacing:-0.25px;border-radius:5.3px">Pending review</div><div class="bd" style="left:361.9px;top:173.08px;width:32.2px;height:10.6px;line-height:11.90px;background:#c4272a;color:#fff;font-size:6.3px;letter-spacing:-0.2px;border-radius:5.3px">Disabled</div><div class="t" style="left:420.2px;top:170.59px;font-size:6.4px;color:#333;-webkit-text-stroke:0.3px #333;">37938</div><div class="bd" style="left:442.2px;top:169.78px;width:17px;height:8.6px;line-height:9.90px;background:#2a7b2f;color:#fff;font-size:5.6px;letter-spacing:-0.1px;-webkit-text-stroke:0.1px #fff;border-radius:4.3px">New</div><div class="t" style="left:420.2px;top:179.79px;font-size:6.4px;color:#757575;letter-spacing:-0.1px;">BWIN Canada Ontario</div><div class="t" style="left:600.4px;top:170.59px;font-size:6.4px;color:#333;-webkit-text-stroke:0.15px #333;letter-spacing:-0.02px;">roman.hromankov@gam..</div><div class="t" style="left:600.4px;top:179.75px;font-size:6.45px;color:#757575;">4 July 2025 at 14:42</div><div class="t" style="left:694.9px;top:174.49px;font-size:6.4px;color:#333;-webkit-text-stroke:0.2px #333;letter-spacing:-0.15px;">Forge</div><div class="bd" style="left:748.8px;top:173.08px;width:61.5px;height:10.6px;line-height:11.90px;background:#f7980f;color:#fff;font-size:6.3px;letter-spacing:-0.22px;border-radius:5.3px">Custom Games List</div><div class="bd" style="left:829.7px;top:173.08px;width:40px;height:10.6px;line-height:11.90px;background:#e5e5e5;color:#505050;font-size:6.3px;border-radius:5.3px;text-align:left;padding-left:4.3px;letter-spacing:-0.1px">Promoted</div><div class="div" style="top:191.06px"></div><div class="bd" style="left:244.6px;top:199.24px;width:35.8px;height:10.6px;line-height:11.90px;background:#2a7b2f;color:#fff;font-size:6.3px;letter-spacing:-0.2px;border-radius:5.3px">Published</div><div class="bd" style="left:303.3px;top:199.24px;width:49.5px;height:10.6px;line-height:11.90px;background:#f7980f;color:#fff;font-size:6.3px;letter-spacing:-0.25px;border-radius:5.3px">Pending review</div><div class="bd" style="left:361.9px;top:199.24px;width:32.2px;height:10.6px;line-height:11.90px;background:#c4272a;color:#fff;font-size:6.3px;letter-spacing:-0.2px;border-radius:5.3px">Disabled</div><div class="t" style="left:420.2px;top:196.75px;font-size:6.4px;color:#333;-webkit-text-stroke:0.3px #333;">37938</div><div class="bd" style="left:442.2px;top:195.94px;width:17px;height:8.6px;line-height:9.90px;background:#2a7b2f;color:#fff;font-size:5.6px;letter-spacing:-0.1px;-webkit-text-stroke:0.1px #fff;border-radius:4.3px">New</div><div class="t" style="left:420.2px;top:205.95px;font-size:6.4px;color:#757575;letter-spacing:-0.1px;">BWIN Canada Ontario</div><div class="t" style="left:600.4px;top:196.75px;font-size:6.4px;color:#333;-webkit-text-stroke:0.15px #333;letter-spacing:-0.02px;">roman.hromankov@gam..</div><div class="t" style="left:600.4px;top:205.91px;font-size:6.45px;color:#757575;">4 July 2025 at 14:42</div><div class="t" style="left:694.9px;top:200.65px;font-size:6.4px;color:#333;-webkit-text-stroke:0.2px #333;letter-spacing:-0.15px;">Forge</div><div class="bd" style="left:748.8px;top:199.24px;width:68.5px;height:10.6px;line-height:11.90px;background:#1a87d6;color:#fff;font-size:6.3px;letter-spacing:-0.22px;border-radius:5.3px">Publishing Games List</div><div class="bd" style="left:829.7px;top:199.24px;width:40px;height:10.6px;line-height:11.90px;background:#e5e5e5;color:#505050;font-size:6.3px;border-radius:5.3px;text-align:left;padding-left:4.3px;letter-spacing:-0.1px">Promoted</div><div class="div" style="top:217.22px"></div><div class="bd" style="left:244.6px;top:225.40px;width:35.8px;height:10.6px;line-height:11.90px;background:#2a7b2f;color:#fff;font-size:6.3px;letter-spacing:-0.2px;border-radius:5.3px">Published</div><div class="bd" style="left:303.2px;top:225.40px;width:32.8px;height:10.6px;line-height:11.90px;background:#2a7b2f;color:#fff;font-size:6.3px;letter-spacing:-0.2px;border-radius:5.3px">Migrated</div><div class="bd" style="left:362.09999999999997px;top:225.40px;width:30.0px;height:10.6px;line-height:11.90px;background:#2a7b2f;color:#fff;font-size:6.3px;letter-spacing:-0.25px;border-radius:5.3px">Enabled</div><div class="t" style="left:420.2px;top:222.91px;font-size:6.4px;color:#333;-webkit-text-stroke:0.3px #333;">37938</div><div class="t" style="left:420.2px;top:232.11px;font-size:6.4px;color:#757575;letter-spacing:-0.1px;">BWIN Canada Ontario</div><div class="t" style="left:600.4px;top:222.91px;font-size:6.4px;color:#333;-webkit-text-stroke:0.15px #333;letter-spacing:-0.02px;">roman.hromankov@gam..</div><div class="t" style="left:600.4px;top:232.07px;font-size:6.45px;color:#757575;">4 July 2025 at 14:42</div><div class="t" style="left:694.9px;top:226.81px;font-size:6.4px;color:#333;-webkit-text-stroke:0.2px #333;letter-spacing:-0.15px;">Forge</div><div class="bd" style="left:748.8px;top:225.40px;width:68.5px;height:10.6px;line-height:11.90px;background:#1a87d6;color:#fff;font-size:6.3px;letter-spacing:-0.22px;border-radius:5.3px">Publishing Games List</div><div class="bd" style="left:829.7px;top:225.40px;width:40px;height:10.6px;line-height:11.90px;background:#e5e5e5;color:#505050;font-size:6.3px;border-radius:5.3px;text-align:left;padding-left:4.3px;letter-spacing:-0.1px">Promoted</div><div class="div" style="top:243.38px"></div><div class="bd" style="left:244.6px;top:251.56px;width:35.8px;height:10.6px;line-height:11.90px;background:#2a7b2f;color:#fff;font-size:6.3px;letter-spacing:-0.2px;border-radius:5.3px">Published</div><div class="bd" style="left:303.2px;top:251.56px;width:32.8px;height:10.6px;line-height:11.90px;background:#2a7b2f;color:#fff;font-size:6.3px;letter-spacing:-0.2px;border-radius:5.3px">Migrated</div><div class="bd" style="left:362.09999999999997px;top:251.56px;width:30.0px;height:10.6px;line-height:11.90px;background:#2a7b2f;color:#fff;font-size:6.3px;letter-spacing:-0.25px;border-radius:5.3px">Enabled</div><div class="t" style="left:420.2px;top:249.07px;font-size:6.4px;color:#333;-webkit-text-stroke:0.3px #333;">37938</div><div class="t" style="left:420.2px;top:258.27px;font-size:6.4px;color:#757575;letter-spacing:-0.1px;">BWIN Canada Ontario</div><div class="t" style="left:600.4px;top:249.07px;font-size:6.4px;color:#333;-webkit-text-stroke:0.15px #333;letter-spacing:-0.02px;">roman.hromankov@gam..</div><div class="t" style="left:600.4px;top:258.23px;font-size:6.45px;color:#757575;">4 July 2025 at 14:42</div><div class="t" style="left:694.9px;top:252.97px;font-size:6.4px;color:#333;-webkit-text-stroke:0.2px #333;letter-spacing:-0.15px;">Forge</div><div class="bd" style="left:748.8px;top:251.56px;width:68.5px;height:10.6px;line-height:11.90px;background:#1a87d6;color:#fff;font-size:6.3px;letter-spacing:-0.22px;border-radius:5.3px">Publishing Games List</div><div class="bd" style="left:829.7px;top:251.56px;width:40px;height:10.6px;line-height:11.90px;background:#e5e5e5;color:#505050;font-size:6.3px;border-radius:5.3px;text-align:left;padding-left:4.3px;letter-spacing:-0.1px">Promoted</div><div class="div" style="top:269.54px"></div><div class="bd" style="left:244.6px;top:277.72px;width:35.8px;height:10.6px;line-height:11.90px;background:#2a7b2f;color:#fff;font-size:6.3px;letter-spacing:-0.2px;border-radius:5.3px">Published</div><div class="bd" style="left:303.2px;top:277.72px;width:32.8px;height:10.6px;line-height:11.90px;background:#2a7b2f;color:#fff;font-size:6.3px;letter-spacing:-0.2px;border-radius:5.3px">Migrated</div><div class="bd" style="left:362.09999999999997px;top:277.72px;width:30.0px;height:10.6px;line-height:11.90px;background:#2a7b2f;color:#fff;font-size:6.3px;letter-spacing:-0.25px;border-radius:5.3px">Enabled</div><div class="t" style="left:420.2px;top:275.23px;font-size:6.4px;color:#333;-webkit-text-stroke:0.3px #333;">37938</div><div class="t" style="left:420.2px;top:284.43px;font-size:6.4px;color:#757575;letter-spacing:-0.1px;">BWIN Canada Ontario</div><div class="t" style="left:600.4px;top:275.23px;font-size:6.4px;color:#333;-webkit-text-stroke:0.15px #333;letter-spacing:-0.02px;">roman.hromankov@gam..</div><div class="t" style="left:600.4px;top:284.39px;font-size:6.45px;color:#757575;">4 July 2025 at 14:42</div><div class="t" style="left:694.9px;top:279.13px;font-size:6.4px;color:#333;-webkit-text-stroke:0.2px #333;letter-spacing:-0.15px;">Forge</div><div class="bd" style="left:748.8px;top:277.72px;width:68.5px;height:10.6px;line-height:11.90px;background:#1a87d6;color:#fff;font-size:6.3px;letter-spacing:-0.22px;border-radius:5.3px">Publishing Games List</div><div class="bd" style="left:829.7px;top:277.72px;width:40px;height:10.6px;line-height:11.90px;background:#e5e5e5;color:#505050;font-size:6.3px;border-radius:5.3px;text-align:left;padding-left:4.3px;letter-spacing:-0.1px">Promoted</div><div class="div" style="top:295.70px"></div><div class="bd" style="left:244.6px;top:303.88px;width:35.8px;height:10.6px;line-height:11.90px;background:#2a7b2f;color:#fff;font-size:6.3px;letter-spacing:-0.2px;border-radius:5.3px">Published</div><div class="bd" style="left:303.2px;top:303.88px;width:32.8px;height:10.6px;line-height:11.90px;background:#2a7b2f;color:#fff;font-size:6.3px;letter-spacing:-0.2px;border-radius:5.3px">Migrated</div><div class="bd" style="left:362.09999999999997px;top:303.88px;width:30.0px;height:10.6px;line-height:11.90px;background:#2a7b2f;color:#fff;font-size:6.3px;letter-spacing:-0.25px;border-radius:5.3px">Enabled</div><div class="t" style="left:420.2px;top:301.39px;font-size:6.4px;color:#333;-webkit-text-stroke:0.3px #333;">37938</div><div class="t" style="left:420.2px;top:310.59px;font-size:6.4px;color:#757575;letter-spacing:-0.1px;">BWIN Canada Ontario</div><div class="t" style="left:600.4px;top:301.39px;font-size:6.4px;color:#333;-webkit-text-stroke:0.15px #333;letter-spacing:-0.02px;">roman.hromankov@gam..</div><div class="t" style="left:600.4px;top:310.55px;font-size:6.45px;color:#757575;">4 July 2025 at 14:42</div><div class="t" style="left:694.9px;top:305.29px;font-size:6.4px;color:#333;-webkit-text-stroke:0.2px #333;letter-spacing:-0.15px;">Forge</div><div class="bd" style="left:748.8px;top:303.88px;width:68.5px;height:10.6px;line-height:11.90px;background:#1a87d6;color:#fff;font-size:6.3px;letter-spacing:-0.22px;border-radius:5.3px">Publishing Games List</div><div class="bd" style="left:829.7px;top:303.88px;width:40px;height:10.6px;line-height:11.90px;background:#e5e5e5;color:#505050;font-size:6.3px;border-radius:5.3px;text-align:left;padding-left:4.3px;letter-spacing:-0.1px">Promoted</div><div class="div" style="top:321.86px"></div><div class="bd" style="left:244.6px;top:330.04px;width:35.8px;height:10.6px;line-height:11.90px;background:#2a7b2f;color:#fff;font-size:6.3px;letter-spacing:-0.2px;border-radius:5.3px">Published</div><div class="bd" style="left:303.2px;top:330.04px;width:32.8px;height:10.6px;line-height:11.90px;background:#2a7b2f;color:#fff;font-size:6.3px;letter-spacing:-0.2px;border-radius:5.3px">Migrated</div><div class="bd" style="left:362.09999999999997px;top:330.04px;width:30.0px;height:10.6px;line-height:11.90px;background:#2a7b2f;color:#fff;font-size:6.3px;letter-spacing:-0.25px;border-radius:5.3px">Enabled</div><div class="t" style="left:420.2px;top:327.55px;font-size:6.4px;color:#333;-webkit-text-stroke:0.3px #333;">37938</div><div class="t" style="left:420.2px;top:336.75px;font-size:6.4px;color:#757575;letter-spacing:-0.1px;">BWIN Canada Ontario</div><div class="t" style="left:600.4px;top:327.55px;font-size:6.4px;color:#333;-webkit-text-stroke:0.15px #333;letter-spacing:-0.02px;">roman.hromankov@gam..</div><div class="t" style="left:600.4px;top:336.71px;font-size:6.45px;color:#757575;">4 July 2025 at 14:42</div><div class="t" style="left:694.9px;top:331.45px;font-size:6.4px;color:#333;-webkit-text-stroke:0.2px #333;letter-spacing:-0.15px;">Forge</div><div class="bd" style="left:748.8px;top:330.04px;width:68.5px;height:10.6px;line-height:11.90px;background:#1a87d6;color:#fff;font-size:6.3px;letter-spacing:-0.22px;border-radius:5.3px">Publishing Games List</div><div class="bd" style="left:829.7px;top:330.04px;width:40px;height:10.6px;line-height:11.90px;background:#e5e5e5;color:#505050;font-size:6.3px;border-radius:5.3px;text-align:left;padding-left:4.3px;letter-spacing:-0.1px">Promoted</div><div class="div" style="top:348.02px"></div><div class="bd" style="left:244.6px;top:356.20px;width:35.8px;height:10.6px;line-height:11.90px;background:#2a7b2f;color:#fff;font-size:6.3px;letter-spacing:-0.2px;border-radius:5.3px">Published</div><div class="bd" style="left:303.2px;top:356.20px;width:32.8px;height:10.6px;line-height:11.90px;background:#2a7b2f;color:#fff;font-size:6.3px;letter-spacing:-0.2px;border-radius:5.3px">Migrated</div><div class="bd" style="left:362.09999999999997px;top:356.20px;width:30.0px;height:10.6px;line-height:11.90px;background:#2a7b2f;color:#fff;font-size:6.3px;letter-spacing:-0.25px;border-radius:5.3px">Enabled</div><div class="t" style="left:420.2px;top:353.71px;font-size:6.4px;color:#333;-webkit-text-stroke:0.3px #333;">37938</div><div class="t" style="left:420.2px;top:362.91px;font-size:6.4px;color:#757575;letter-spacing:-0.1px;">BWIN Canada Ontario</div><div class="t" style="left:600.4px;top:353.71px;font-size:6.4px;color:#333;-webkit-text-stroke:0.15px #333;letter-spacing:-0.02px;">roman.hromankov@gam..</div><div class="t" style="left:600.4px;top:362.87px;font-size:6.45px;color:#757575;">4 July 2025 at 14:42</div><div class="t" style="left:694.9px;top:357.61px;font-size:6.4px;color:#333;-webkit-text-stroke:0.2px #333;letter-spacing:-0.15px;">Forge</div><div class="bd" style="left:748.8px;top:356.20px;width:68.5px;height:10.6px;line-height:11.90px;background:#1a87d6;color:#fff;font-size:6.3px;letter-spacing:-0.22px;border-radius:5.3px">Publishing Games List</div><div class="bd" style="left:829.7px;top:356.20px;width:40px;height:10.6px;line-height:11.90px;background:#e5e5e5;color:#505050;font-size:6.3px;border-radius:5.3px;text-align:left;padding-left:4.3px;letter-spacing:-0.1px">Promoted</div><div class="div" style="top:374.18px"></div><div class="bd" style="left:244.6px;top:382.36px;width:35.8px;height:10.6px;line-height:11.90px;background:#2a7b2f;color:#fff;font-size:6.3px;letter-spacing:-0.2px;border-radius:5.3px">Published</div><div class="bd" style="left:303.2px;top:382.36px;width:32.8px;height:10.6px;line-height:11.90px;background:#2a7b2f;color:#fff;font-size:6.3px;letter-spacing:-0.2px;border-radius:5.3px">Migrated</div><div class="bd" style="left:362.09999999999997px;top:382.36px;width:30.0px;height:10.6px;line-height:11.90px;background:#2a7b2f;color:#fff;font-size:6.3px;letter-spacing:-0.25px;border-radius:5.3px">Enabled</div><div class="t" style="left:420.2px;top:379.87px;font-size:6.4px;color:#333;-webkit-text-stroke:0.3px #333;">37938</div><div class="t" style="left:420.2px;top:389.07px;font-size:6.4px;color:#757575;letter-spacing:-0.1px;">BWIN Canada Ontario</div><div class="t" style="left:600.4px;top:379.87px;font-size:6.4px;color:#333;-webkit-text-stroke:0.15px #333;letter-spacing:-0.02px;">roman.hromankov@gam..</div><div class="t" style="left:600.4px;top:389.03px;font-size:6.45px;color:#757575;">4 July 2025 at 14:42</div><div class="t" style="left:694.9px;top:383.77px;font-size:6.4px;color:#333;-webkit-text-stroke:0.2px #333;letter-spacing:-0.15px;">Forge</div><div class="bd" style="left:748.8px;top:382.36px;width:68.5px;height:10.6px;line-height:11.90px;background:#1a87d6;color:#fff;font-size:6.3px;letter-spacing:-0.22px;border-radius:5.3px">Publishing Games List</div><div class="bd" style="left:829.7px;top:382.36px;width:40px;height:10.6px;line-height:11.90px;background:#e5e5e5;color:#505050;font-size:6.3px;border-radius:5.3px;text-align:left;padding-left:4.3px;letter-spacing:-0.1px">Promoted</div><div class="div" style="top:400.34px"></div><div class="bd" style="left:244.6px;top:408.52px;width:35.8px;height:10.6px;line-height:11.90px;background:#2a7b2f;color:#fff;font-size:6.3px;letter-spacing:-0.2px;border-radius:5.3px">Published</div><div class="bd" style="left:303.2px;top:408.52px;width:32.8px;height:10.6px;line-height:11.90px;background:#2a7b2f;color:#fff;font-size:6.3px;letter-spacing:-0.2px;border-radius:5.3px">Migrated</div><div class="bd" style="left:362.09999999999997px;top:408.52px;width:30.0px;height:10.6px;line-height:11.90px;background:#2a7b2f;color:#fff;font-size:6.3px;letter-spacing:-0.25px;border-radius:5.3px">Enabled</div><div class="t" style="left:420.2px;top:406.03px;font-size:6.4px;color:#333;-webkit-text-stroke:0.3px #333;">37938</div><div class="t" style="left:420.2px;top:415.23px;font-size:6.4px;color:#757575;letter-spacing:-0.1px;">BWIN Canada Ontario</div><div class="t" style="left:600.4px;top:406.03px;font-size:6.4px;color:#333;-webkit-text-stroke:0.15px #333;letter-spacing:-0.02px;">roman.hromankov@gam..</div><div class="t" style="left:600.4px;top:415.19px;font-size:6.45px;color:#757575;">4 July 2025 at 14:42</div><div class="t" style="left:694.9px;top:409.93px;font-size:6.4px;color:#333;-webkit-text-stroke:0.2px #333;letter-spacing:-0.15px;">Forge</div><div class="bd" style="left:748.8px;top:408.52px;width:68.5px;height:10.6px;line-height:11.90px;background:#1a87d6;color:#fff;font-size:6.3px;letter-spacing:-0.22px;border-radius:5.3px">Publishing Games List</div><div class="bd" style="left:829.7px;top:408.52px;width:40px;height:10.6px;line-height:11.90px;background:#e5e5e5;color:#505050;font-size:6.3px;border-radius:5.3px;text-align:left;padding-left:4.3px;letter-spacing:-0.1px">Promoted</div><div class="div" style="top:426.50px"></div><div class="bd" style="left:244.6px;top:434.68px;width:35.8px;height:10.6px;line-height:11.90px;background:#2a7b2f;color:#fff;font-size:6.3px;letter-spacing:-0.2px;border-radius:5.3px">Published</div><div class="bd" style="left:303.2px;top:434.68px;width:32.8px;height:10.6px;line-height:11.90px;background:#2a7b2f;color:#fff;font-size:6.3px;letter-spacing:-0.2px;border-radius:5.3px">Migrated</div><div class="bd" style="left:362.09999999999997px;top:434.68px;width:30.0px;height:10.6px;line-height:11.90px;background:#2a7b2f;color:#fff;font-size:6.3px;letter-spacing:-0.25px;border-radius:5.3px">Enabled</div><div class="t" style="left:420.2px;top:432.19px;font-size:6.4px;color:#333;-webkit-text-stroke:0.3px #333;">37938</div><div class="t" style="left:420.2px;top:441.39px;font-size:6.4px;color:#757575;letter-spacing:-0.1px;">BWIN Canada Ontario</div><div class="t" style="left:600.4px;top:432.19px;font-size:6.4px;color:#333;-webkit-text-stroke:0.15px #333;letter-spacing:-0.02px;">roman.hromankov@gam..</div><div class="t" style="left:600.4px;top:441.35px;font-size:6.45px;color:#757575;">4 July 2025 at 14:42</div><div class="t" style="left:694.9px;top:436.09px;font-size:6.4px;color:#333;-webkit-text-stroke:0.2px #333;letter-spacing:-0.15px;">Forge</div><div class="bd" style="left:748.8px;top:434.68px;width:68.5px;height:10.6px;line-height:11.90px;background:#1a87d6;color:#fff;font-size:6.3px;letter-spacing:-0.22px;border-radius:5.3px">Publishing Games List</div><div class="bd" style="left:829.7px;top:434.68px;width:40px;height:10.6px;line-height:11.90px;background:#e5e5e5;color:#505050;font-size:6.3px;border-radius:5.3px;text-align:left;padding-left:4.3px;letter-spacing:-0.1px">Promoted</div><div class="div" style="top:452.66px"></div>
<div class="abs" style="left:240.5px;top:452.5px;width:607.5px;height:7px;background:#f7f7f7"></div>
<div class="abs" style="left:243px;top:454.6px;width:112.3px;height:2.9px;background:#a9a9a9;border-radius:1.5px"></div>
</div>
<div class="t" style="left:704.8px;top:465.86px;font-size:5.8px;color:#7a7a7a;letter-spacing:-0.08px;">Rows per page:</div>
<div class="t" style="left:748.4px;top:465.86px;font-size:5.8px;color:#555;">10</div>
<svg style="position:absolute;left:758.4px;top:467.6px" width="3.4" height="2" viewBox="0 0 3.4 2"><path d="M0 0H3.4L1.7 2Z" fill="#555"/></svg>
<div class="t" style="left:777.2px;top:465.86px;font-size:5.8px;color:#555;">1-5 of 13</div>
<svg style="position:absolute;left:816.7px;top:464.8px" width="8.5" height="8.5" viewBox="0 0 24 24"><path fill="#6a6a6a" stroke="#6a6a6a" stroke-width="0.8" d="M15.41 7.41L14 6l-6 6 6 6 1.41-1.41L10.83 12z"/></svg>
<svg style="position:absolute;left:834.2px;top:464.8px" width="8.5" height="8.5" viewBox="0 0 24 24"><path fill="#6a6a6a" stroke="#6a6a6a" stroke-width="0.8" d="M10 6L8.59 7.41 13.17 12l-4.58 4.59L10 18l6-6z"/></svg>
</body></html>
